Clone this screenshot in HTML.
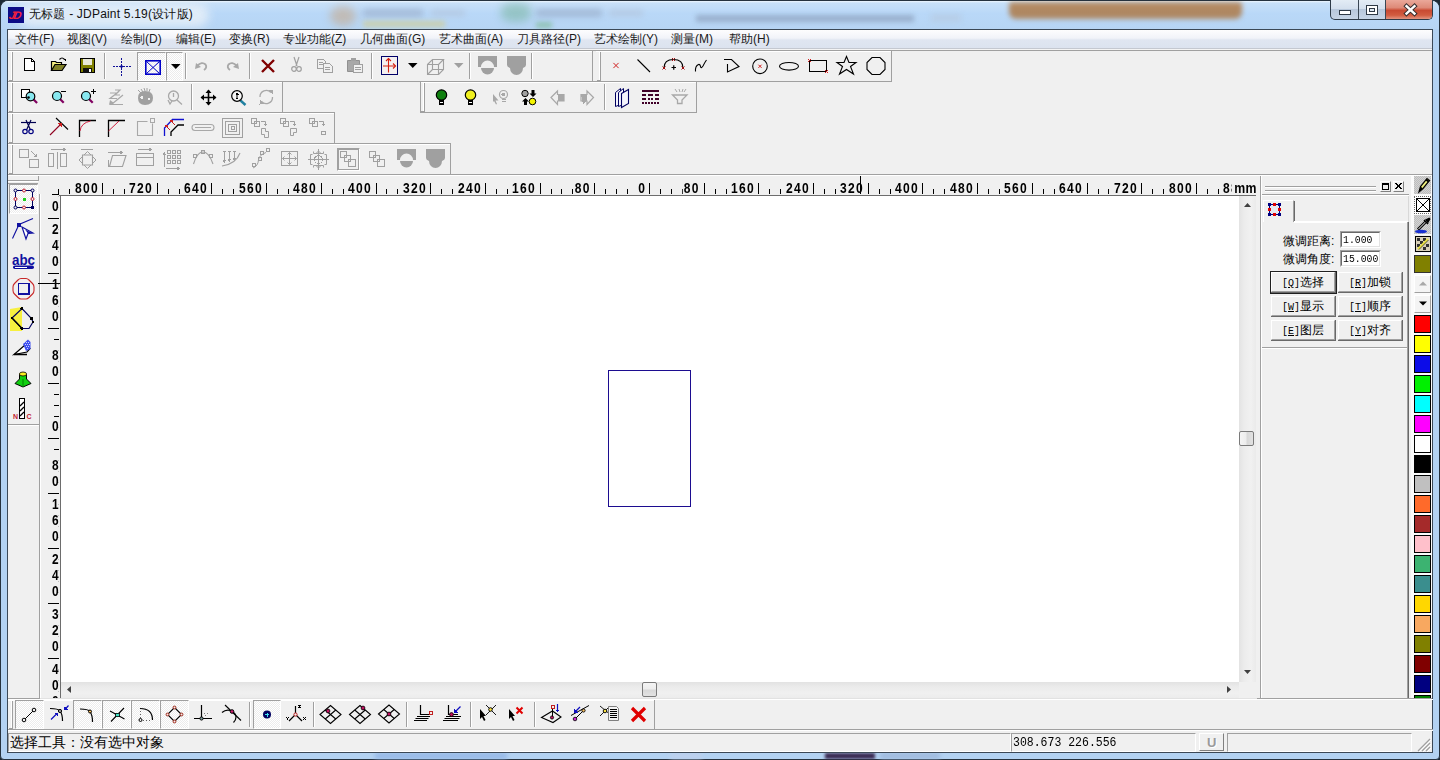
<!DOCTYPE html>
<html><head><meta charset="utf-8">
<style>
*{margin:0;padding:0;box-sizing:border-box}
html,body{width:1440px;height:760px;overflow:hidden;background:#1d2a36}
body{position:relative;font-family:"Liberation Sans",sans-serif;font-size:12px;color:#000}
.t{position:absolute;white-space:nowrap;line-height:1}
svg{position:absolute;overflow:visible;shape-rendering:crispEdges}
svg .s{shape-rendering:geometricPrecision}
.rl{position:absolute;font-weight:bold;font-size:14px;line-height:12px;white-space:nowrap;background:#f0f0f0}
</style></head><body>

<div style="position:absolute;left:0px;top:0px;width:1440px;height:760px;background:#b3d2f2;border:1px solid #26323e;border-radius:8px 8px 4px 4px"></div>
<div style="position:absolute;left:1px;top:1px;width:1438px;height:28px;background:linear-gradient(#eef6fd,#c8e0f8 2px,#b9d8f8 45%,#b7d5f4);border-radius:7px 7px 0 0;overflow:hidden"><div style="position:absolute;left:18px;top:2px;width:190px;height:24px;background:#e4eef8;filter:blur(5px);border-radius:12px;opacity:.9"></div><div style="position:absolute;left:329px;top:5px;width:26px;height:20px;background:#c8a078;filter:blur(4px);opacity:.5;border-radius:50%"></div><div style="position:absolute;left:362px;top:8px;width:60px;height:8px;background:#9fb3cf;filter:blur(3px);opacity:.8"></div><div style="position:absolute;left:430px;top:9px;width:34px;height:6px;background:#b3c5dc;filter:blur(3px);opacity:.8"></div><div style="position:absolute;left:362px;top:20px;width:82px;height:6px;background:#cfcf9c;filter:blur(2.5px);opacity:.8"></div><div style="position:absolute;left:500px;top:2px;width:30px;height:19px;background:#78b49e;filter:blur(4px);opacity:.55;border-radius:40%"></div><div style="position:absolute;left:535px;top:21px;width:16px;height:6px;background:#86bea4;filter:blur(2.5px);opacity:.8"></div><div style="position:absolute;left:535px;top:8px;width:66px;height:8px;background:#9db2ce;filter:blur(3px);opacity:.8"></div><div style="position:absolute;left:608px;top:9px;width:34px;height:6px;background:#b3c5dc;filter:blur(3px);opacity:.8"></div><div style="position:absolute;left:695px;top:14px;width:218px;height:7px;background:#94a9c6;filter:blur(2.5px);opacity:.85"></div><div style="position:absolute;left:930px;top:14px;width:30px;height:6px;background:#b6c8de;filter:blur(3px);opacity:.8"></div><div style="position:absolute;left:1008px;top:1px;width:233px;height:17px;background:linear-gradient(#b98e66,#ad8660 60%,#b08c68);filter:blur(2.5px);border-radius:3px 3px 7px 7px"></div></div>
<div style="position:absolute;left:1330px;top:0px;width:103px;height:20px;border:1px solid #2e3b48;border-top:none;border-radius:0 0 5px 5px;overflow:hidden;background:linear-gradient(#e3ecf5,#d4e0ee 45%,#b8c8dc 50%,#c6d5e6)"><div style="position:absolute;left:54px;top:0;width:48px;height:19px;background:linear-gradient(#eaa89a,#de8a78 40%,#c94a32 55%,#d25c40 80%,#e39480)"></div><div style="position:absolute;left:27px;top:0;width:1px;height:19px;background:#3a4754"></div><div style="position:absolute;left:54px;top:0;width:1px;height:19px;background:#3a4754"></div><div style="position:absolute;left:8px;top:10px;width:12px;height:5px;border:1px solid #2f3a46;background:#fff"></div><div style="position:absolute;left:35px;top:5px;width:12px;height:10px;border:1px solid #2f3a46;background:#fff"><div style="position:absolute;left:2px;top:2px;width:6px;height:4px;border:1px solid #2f3a46;background:#dfe8f2"></div></div><svg style="left:74px;top:5px" width="11" height="10" viewBox="0 0 11 10"><path class="s" d="M1.5 1.2 L9.5 8.6 M9.5 1.2 L1.5 8.6" stroke="#3a3030" stroke-width="4.4" stroke-linecap="square"/><path class="s" d="M1.5 1.2 L9.5 8.6 M9.5 1.2 L1.5 8.6" stroke="#fff" stroke-width="2.4" stroke-linecap="square"/></svg></div>
<div style="position:absolute;left:8px;top:7px;width:16px;height:16px;background:#0c0c86"><div style="position:absolute;left:1px;top:3px;font:italic bold 11px/11px 'Liberation Sans',sans-serif;color:#f02040;letter-spacing:-1.5px;transform:skewX(-12deg)">JD</div></div>
<div class="t" style="left:29px;top:8px;font-size:12px;color:#111;letter-spacing:0.2px">无标题 - JDPaint 5.19(设计版)</div>
<div style="position:absolute;left:375px;top:753px;width:132px;height:6px;background:#8fb2e4;filter:blur(2px);opacity:.8"></div>
<div style="position:absolute;left:825px;top:753px;width:50px;height:6px;background:#3a2a52;filter:blur(1.5px)"></div>
<div style="position:absolute;left:880px;top:753px;width:60px;height:6px;background:#9ab4d8;filter:blur(2px);opacity:.8"></div>
<div style="position:absolute;left:670px;top:753px;width:32px;height:6px;background:#c0d0ec;filter:blur(2px);opacity:.8"></div>
<div style="position:absolute;left:7px;top:29px;width:1426px;height:724px;border:1px solid #3b4856;background:#f0f0f0"></div>
<div style="position:absolute;left:8px;top:30px;width:1424px;height:18px;background:linear-gradient(#fdfdfe,#f1f3f9 45%,#e0e6f1 55%,#dce3ef)"></div>
<div style="position:absolute;left:8px;top:48px;width:1424px;height:1px;background:#c4c8d0"></div>
<div style="position:absolute;left:8px;top:49px;width:1424px;height:1px;background:#f4f4f4"></div>
<div class="t" style="left:15px;top:33px;font-size:12px;color:#1a1a1a">文件(F)</div>
<div class="t" style="left:67px;top:33px;font-size:12px;color:#1a1a1a">视图(V)</div>
<div class="t" style="left:121px;top:33px;font-size:12px;color:#1a1a1a">绘制(D)</div>
<div class="t" style="left:176px;top:33px;font-size:12px;color:#1a1a1a">编辑(E)</div>
<div class="t" style="left:229px;top:33px;font-size:12px;color:#1a1a1a">变换(R)</div>
<div class="t" style="left:283px;top:33px;font-size:12px;color:#1a1a1a">专业功能(Z)</div>
<div class="t" style="left:360px;top:33px;font-size:12px;color:#1a1a1a">几何曲面(G)</div>
<div class="t" style="left:439px;top:33px;font-size:12px;color:#1a1a1a">艺术曲面(A)</div>
<div class="t" style="left:517px;top:33px;font-size:12px;color:#1a1a1a">刀具路径(P)</div>
<div class="t" style="left:594px;top:33px;font-size:12px;color:#1a1a1a">艺术绘制(Y)</div>
<div class="t" style="left:671px;top:33px;font-size:12px;color:#1a1a1a">测量(M)</div>
<div class="t" style="left:729px;top:33px;font-size:12px;color:#1a1a1a">帮助(H)</div>
<div style="position:absolute;left:8px;top:174px;width:1424px;height:1px;background:#a0a0a0"></div>
<div style="position:absolute;left:8px;top:175px;width:1424px;height:1px;background:#ffffff"></div>
<div style="position:absolute;left:8px;top:50px;width:1424px;height:1px;background:#a0a0a0"></div>
<div style="position:absolute;left:8px;top:50px;width:585px;height:1px;background:#a0a0a0"></div>
<div style="position:absolute;left:8px;top:51px;width:584px;height:1px;background:#ffffff"></div>
<div style="position:absolute;left:8px;top:81px;width:585px;height:1px;background:#a0a0a0"></div>
<div style="position:absolute;left:592px;top:50px;width:1px;height:32px;background:#a0a0a0"></div>
<div style="position:absolute;left:11px;top:52px;width:1px;height:28px;background:#ffffff"></div>
<div style="position:absolute;left:12px;top:52px;width:1px;height:28px;background:#a0a0a0"></div>
<div style="position:absolute;left:9px;top:80px;width:4px;height:1px;background:#a0a0a0"></div>
<div style="position:absolute;left:596px;top:50px;width:296px;height:1px;background:#a0a0a0"></div>
<div style="position:absolute;left:596px;top:51px;width:295px;height:1px;background:#ffffff"></div>
<div style="position:absolute;left:596px;top:81px;width:296px;height:1px;background:#a0a0a0"></div>
<div style="position:absolute;left:891px;top:50px;width:1px;height:32px;background:#a0a0a0"></div>
<div style="position:absolute;left:599px;top:52px;width:1px;height:28px;background:#ffffff"></div>
<div style="position:absolute;left:600px;top:52px;width:1px;height:28px;background:#a0a0a0"></div>
<div style="position:absolute;left:597px;top:80px;width:4px;height:1px;background:#a0a0a0"></div>
<div style="position:absolute;left:8px;top:81px;width:275px;height:1px;background:#a0a0a0"></div>
<div style="position:absolute;left:8px;top:82px;width:274px;height:1px;background:#ffffff"></div>
<div style="position:absolute;left:8px;top:112px;width:275px;height:1px;background:#a0a0a0"></div>
<div style="position:absolute;left:282px;top:81px;width:1px;height:32px;background:#a0a0a0"></div>
<div style="position:absolute;left:11px;top:83px;width:1px;height:28px;background:#ffffff"></div>
<div style="position:absolute;left:12px;top:83px;width:1px;height:28px;background:#a0a0a0"></div>
<div style="position:absolute;left:9px;top:111px;width:4px;height:1px;background:#a0a0a0"></div>
<div style="position:absolute;left:420px;top:81px;width:277px;height:1px;background:#a0a0a0"></div>
<div style="position:absolute;left:420px;top:82px;width:276px;height:1px;background:#ffffff"></div>
<div style="position:absolute;left:420px;top:112px;width:277px;height:1px;background:#a0a0a0"></div>
<div style="position:absolute;left:696px;top:81px;width:1px;height:32px;background:#a0a0a0"></div>
<div style="position:absolute;left:423px;top:83px;width:1px;height:28px;background:#ffffff"></div>
<div style="position:absolute;left:424px;top:83px;width:1px;height:28px;background:#a0a0a0"></div>
<div style="position:absolute;left:421px;top:111px;width:4px;height:1px;background:#a0a0a0"></div>
<div style="position:absolute;left:8px;top:112px;width:327px;height:1px;background:#a0a0a0"></div>
<div style="position:absolute;left:8px;top:113px;width:326px;height:1px;background:#ffffff"></div>
<div style="position:absolute;left:8px;top:143px;width:327px;height:1px;background:#a0a0a0"></div>
<div style="position:absolute;left:334px;top:112px;width:1px;height:32px;background:#a0a0a0"></div>
<div style="position:absolute;left:11px;top:114px;width:1px;height:28px;background:#ffffff"></div>
<div style="position:absolute;left:12px;top:114px;width:1px;height:28px;background:#a0a0a0"></div>
<div style="position:absolute;left:9px;top:142px;width:4px;height:1px;background:#a0a0a0"></div>
<div style="position:absolute;left:8px;top:143px;width:443px;height:1px;background:#a0a0a0"></div>
<div style="position:absolute;left:8px;top:144px;width:442px;height:1px;background:#ffffff"></div>
<div style="position:absolute;left:8px;top:174px;width:443px;height:1px;background:#a0a0a0"></div>
<div style="position:absolute;left:450px;top:143px;width:1px;height:32px;background:#a0a0a0"></div>
<div style="position:absolute;left:11px;top:145px;width:1px;height:28px;background:#ffffff"></div>
<div style="position:absolute;left:12px;top:145px;width:1px;height:28px;background:#a0a0a0"></div>
<div style="position:absolute;left:9px;top:173px;width:4px;height:1px;background:#a0a0a0"></div>
<div style="position:absolute;left:420px;top:82px;width:1px;height:30px;background:#a0a0a0"></div>
<div style="position:absolute;left:8px;top:180px;width:31px;height:1px;background:#a0a0a0"></div>
<div style="position:absolute;left:8px;top:181px;width:30px;height:1px;background:#ffffff"></div>
<div style="position:absolute;left:8px;top:183px;width:30px;height:1px;background:#a0a0a0"></div>
<div style="position:absolute;left:38px;top:176px;width:1px;height:5px;background:#a0a0a0"></div>
<div style="position:absolute;left:8px;top:424px;width:31px;height:1px;background:#a0a0a0"></div>
<div style="position:absolute;left:8px;top:425px;width:31px;height:1px;background:#ffffff"></div>
<div style="position:absolute;left:9px;top:184px;width:29px;height:30px;background-color:#f7f7f7;background-image:repeating-conic-gradient(#ffffff 0 25%,#ececec 0 50%);background-size:2px 2px;border-top:1px solid #a0a0a0;border-left:1px solid #a0a0a0;border-bottom:1px solid #fff;border-right:1px solid #fff"></div>
<div style="position:absolute;left:39px;top:194px;width:1px;height:504px;background:#a0a0a0"></div>
<div style="position:absolute;left:40px;top:194px;width:1px;height:504px;background:#ffffff"></div>
<div style="position:absolute;left:61px;top:196px;width:1178px;height:486px;background:#fff"></div>
<div style="position:absolute;left:59px;top:195px;width:1197px;height:1px;background:#6d6d6d"></div>
<div style="position:absolute;left:60px;top:195px;width:1px;height:503px;background:#6d6d6d"></div>
<div style="position:absolute;left:608px;top:370px;width:83px;height:137px;border:1px solid #1c0c90"></div>
<div style="position:absolute;left:1239px;top:196px;width:17px;height:486px;background:linear-gradient(90deg,#e3e3e3,#ececec 30%,#f1f1f1 70%,#eaeaea)"></div>
<div style="position:absolute;left:61px;top:682px;width:1178px;height:16px;background:linear-gradient(#e2e2e2,#ebebeb 30%,#f0f0f0 70%,#ececec)"></div>
<div style="position:absolute;left:1239px;top:682px;width:17px;height:16px;background:#f0f0f0"></div>
<div style="position:absolute;left:1239px;top:431px;width:15px;height:15px;border:1px solid #7a7a7a;border-radius:2px;background:linear-gradient(90deg,#f4f4f4,#ededed 45%,#d8d8d8 55%,#e2e2e2)"></div>
<div style="position:absolute;left:642px;top:682px;width:15px;height:15px;border:1px solid #7a7a7a;border-radius:2px;background:linear-gradient(#f4f4f4,#ededed 45%,#d8d8d8 55%,#e2e2e2)"></div>
<svg style="left:1244px;top:203px;" width="7" height="4" viewBox="0 0 7 4"><path class="s" d="M0 4 L3.5 0 L7 4 Z" fill="#404040"/></svg>
<svg style="left:1244px;top:670px;" width="7" height="4" viewBox="0 0 7 4"><path class="s" d="M0 0 L7 0 L3.5 4 Z" fill="#404040"/></svg>
<svg style="left:67px;top:686px;" width="4" height="7" viewBox="0 0 4 7"><path class="s" d="M4 0 L0 3.5 L4 7 Z" fill="#404040"/></svg>
<svg style="left:1227px;top:686px;" width="4" height="7" viewBox="0 0 4 7"><path class="s" d="M0 0 L4 3.5 L0 7 Z" fill="#404040"/></svg>
<div style="position:absolute;left:8px;top:698px;width:32px;height:1px;background:#a0a0a0"></div>
<div style="position:absolute;left:40px;top:698px;width:1218px;height:1px;background:#e2e2e2"></div>
<div style="position:absolute;left:8px;top:699px;width:1425px;height:1px;background:#ffffff"></div>
<div style="position:absolute;left:41px;top:176px;width:1215px;height:19px;overflow:hidden">
<div style="position:absolute;left:17px;top:13px;width:1px;height:5px;background:#000"></div>
<div style="position:absolute;left:28px;top:13px;width:1px;height:5px;background:#000"></div>
<div style="position:absolute;left:39px;top:13px;width:1px;height:5px;background:#000"></div>
<div style="position:absolute;left:50px;top:13px;width:1px;height:5px;background:#000"></div>
<div style="position:absolute;left:61px;top:7px;width:1px;height:11px;background:#000"></div>
<div class="rl" style="right:1157px;top:6px;letter-spacing:1.6px;padding-left:1px;transform:scaleX(0.86);transform-origin:100% 0">800</div>
<div style="position:absolute;left:72px;top:13px;width:1px;height:5px;background:#000"></div>
<div style="position:absolute;left:83px;top:13px;width:1px;height:5px;background:#000"></div>
<div style="position:absolute;left:94px;top:13px;width:1px;height:5px;background:#000"></div>
<div style="position:absolute;left:105px;top:13px;width:1px;height:5px;background:#000"></div>
<div style="position:absolute;left:116px;top:7px;width:1px;height:11px;background:#000"></div>
<div class="rl" style="right:1103px;top:6px;letter-spacing:1.6px;padding-left:1px;transform:scaleX(0.86);transform-origin:100% 0">720</div>
<div style="position:absolute;left:127px;top:13px;width:1px;height:5px;background:#000"></div>
<div style="position:absolute;left:138px;top:13px;width:1px;height:5px;background:#000"></div>
<div style="position:absolute;left:149px;top:13px;width:1px;height:5px;background:#000"></div>
<div style="position:absolute;left:159px;top:13px;width:1px;height:5px;background:#000"></div>
<div style="position:absolute;left:170px;top:7px;width:1px;height:11px;background:#000"></div>
<div class="rl" style="right:1048px;top:6px;letter-spacing:1.6px;padding-left:1px;transform:scaleX(0.86);transform-origin:100% 0">640</div>
<div style="position:absolute;left:181px;top:13px;width:1px;height:5px;background:#000"></div>
<div style="position:absolute;left:192px;top:13px;width:1px;height:5px;background:#000"></div>
<div style="position:absolute;left:203px;top:13px;width:1px;height:5px;background:#000"></div>
<div style="position:absolute;left:214px;top:13px;width:1px;height:5px;background:#000"></div>
<div style="position:absolute;left:225px;top:7px;width:1px;height:11px;background:#000"></div>
<div class="rl" style="right:993px;top:6px;letter-spacing:1.6px;padding-left:1px;transform:scaleX(0.86);transform-origin:100% 0">560</div>
<div style="position:absolute;left:236px;top:13px;width:1px;height:5px;background:#000"></div>
<div style="position:absolute;left:247px;top:13px;width:1px;height:5px;background:#000"></div>
<div style="position:absolute;left:258px;top:13px;width:1px;height:5px;background:#000"></div>
<div style="position:absolute;left:269px;top:13px;width:1px;height:5px;background:#000"></div>
<div style="position:absolute;left:280px;top:7px;width:1px;height:11px;background:#000"></div>
<div class="rl" style="right:939px;top:6px;letter-spacing:1.6px;padding-left:1px;transform:scaleX(0.86);transform-origin:100% 0">480</div>
<div style="position:absolute;left:291px;top:13px;width:1px;height:5px;background:#000"></div>
<div style="position:absolute;left:302px;top:13px;width:1px;height:5px;background:#000"></div>
<div style="position:absolute;left:313px;top:13px;width:1px;height:5px;background:#000"></div>
<div style="position:absolute;left:324px;top:13px;width:1px;height:5px;background:#000"></div>
<div style="position:absolute;left:335px;top:7px;width:1px;height:11px;background:#000"></div>
<div class="rl" style="right:884px;top:6px;letter-spacing:1.6px;padding-left:1px;transform:scaleX(0.86);transform-origin:100% 0">400</div>
<div style="position:absolute;left:345px;top:13px;width:1px;height:5px;background:#000"></div>
<div style="position:absolute;left:356px;top:13px;width:1px;height:5px;background:#000"></div>
<div style="position:absolute;left:367px;top:13px;width:1px;height:5px;background:#000"></div>
<div style="position:absolute;left:378px;top:13px;width:1px;height:5px;background:#000"></div>
<div style="position:absolute;left:389px;top:7px;width:1px;height:11px;background:#000"></div>
<div class="rl" style="right:829px;top:6px;letter-spacing:1.6px;padding-left:1px;transform:scaleX(0.86);transform-origin:100% 0">320</div>
<div style="position:absolute;left:400px;top:13px;width:1px;height:5px;background:#000"></div>
<div style="position:absolute;left:411px;top:13px;width:1px;height:5px;background:#000"></div>
<div style="position:absolute;left:422px;top:13px;width:1px;height:5px;background:#000"></div>
<div style="position:absolute;left:433px;top:13px;width:1px;height:5px;background:#000"></div>
<div style="position:absolute;left:444px;top:7px;width:1px;height:11px;background:#000"></div>
<div class="rl" style="right:774px;top:6px;letter-spacing:1.6px;padding-left:1px;transform:scaleX(0.86);transform-origin:100% 0">240</div>
<div style="position:absolute;left:455px;top:13px;width:1px;height:5px;background:#000"></div>
<div style="position:absolute;left:466px;top:13px;width:1px;height:5px;background:#000"></div>
<div style="position:absolute;left:477px;top:13px;width:1px;height:5px;background:#000"></div>
<div style="position:absolute;left:488px;top:13px;width:1px;height:5px;background:#000"></div>
<div style="position:absolute;left:499px;top:7px;width:1px;height:11px;background:#000"></div>
<div class="rl" style="right:720px;top:6px;letter-spacing:1.6px;padding-left:1px;transform:scaleX(0.86);transform-origin:100% 0">160</div>
<div style="position:absolute;left:510px;top:13px;width:1px;height:5px;background:#000"></div>
<div style="position:absolute;left:520px;top:13px;width:1px;height:5px;background:#000"></div>
<div style="position:absolute;left:531px;top:13px;width:1px;height:5px;background:#000"></div>
<div style="position:absolute;left:542px;top:13px;width:1px;height:5px;background:#000"></div>
<div style="position:absolute;left:553px;top:7px;width:1px;height:11px;background:#000"></div>
<div class="rl" style="right:665px;top:6px;letter-spacing:1.6px;padding-left:1px;transform:scaleX(0.86);transform-origin:100% 0">80</div>
<div style="position:absolute;left:564px;top:13px;width:1px;height:5px;background:#000"></div>
<div style="position:absolute;left:575px;top:13px;width:1px;height:5px;background:#000"></div>
<div style="position:absolute;left:586px;top:13px;width:1px;height:5px;background:#000"></div>
<div style="position:absolute;left:597px;top:13px;width:1px;height:5px;background:#000"></div>
<div style="position:absolute;left:608px;top:7px;width:1px;height:11px;background:#000"></div>
<div class="rl" style="right:610px;top:6px;letter-spacing:1.6px;padding-left:1px;transform:scaleX(0.86);transform-origin:100% 0">0</div>
<div style="position:absolute;left:619px;top:13px;width:1px;height:5px;background:#000"></div>
<div style="position:absolute;left:630px;top:13px;width:1px;height:5px;background:#000"></div>
<div style="position:absolute;left:641px;top:13px;width:1px;height:5px;background:#000"></div>
<div style="position:absolute;left:652px;top:13px;width:1px;height:5px;background:#000"></div>
<div style="position:absolute;left:663px;top:7px;width:1px;height:11px;background:#000"></div>
<div class="rl" style="right:556px;top:6px;letter-spacing:1.6px;padding-left:1px;transform:scaleX(0.86);transform-origin:100% 0">80</div>
<div style="position:absolute;left:674px;top:13px;width:1px;height:5px;background:#000"></div>
<div style="position:absolute;left:685px;top:13px;width:1px;height:5px;background:#000"></div>
<div style="position:absolute;left:696px;top:13px;width:1px;height:5px;background:#000"></div>
<div style="position:absolute;left:706px;top:13px;width:1px;height:5px;background:#000"></div>
<div style="position:absolute;left:717px;top:7px;width:1px;height:11px;background:#000"></div>
<div class="rl" style="right:501px;top:6px;letter-spacing:1.6px;padding-left:1px;transform:scaleX(0.86);transform-origin:100% 0">160</div>
<div style="position:absolute;left:728px;top:13px;width:1px;height:5px;background:#000"></div>
<div style="position:absolute;left:739px;top:13px;width:1px;height:5px;background:#000"></div>
<div style="position:absolute;left:750px;top:13px;width:1px;height:5px;background:#000"></div>
<div style="position:absolute;left:761px;top:13px;width:1px;height:5px;background:#000"></div>
<div style="position:absolute;left:772px;top:7px;width:1px;height:11px;background:#000"></div>
<div class="rl" style="right:446px;top:6px;letter-spacing:1.6px;padding-left:1px;transform:scaleX(0.86);transform-origin:100% 0">240</div>
<div style="position:absolute;left:783px;top:13px;width:1px;height:5px;background:#000"></div>
<div style="position:absolute;left:794px;top:13px;width:1px;height:5px;background:#000"></div>
<div style="position:absolute;left:805px;top:13px;width:1px;height:5px;background:#000"></div>
<div style="position:absolute;left:816px;top:13px;width:1px;height:5px;background:#000"></div>
<div style="position:absolute;left:827px;top:7px;width:1px;height:11px;background:#000"></div>
<div class="rl" style="right:392px;top:6px;letter-spacing:1.6px;padding-left:1px;transform:scaleX(0.86);transform-origin:100% 0">320</div>
<div style="position:absolute;left:838px;top:13px;width:1px;height:5px;background:#000"></div>
<div style="position:absolute;left:849px;top:13px;width:1px;height:5px;background:#000"></div>
<div style="position:absolute;left:860px;top:13px;width:1px;height:5px;background:#000"></div>
<div style="position:absolute;left:871px;top:13px;width:1px;height:5px;background:#000"></div>
<div style="position:absolute;left:881px;top:7px;width:1px;height:11px;background:#000"></div>
<div class="rl" style="right:337px;top:6px;letter-spacing:1.6px;padding-left:1px;transform:scaleX(0.86);transform-origin:100% 0">400</div>
<div style="position:absolute;left:892px;top:13px;width:1px;height:5px;background:#000"></div>
<div style="position:absolute;left:903px;top:13px;width:1px;height:5px;background:#000"></div>
<div style="position:absolute;left:914px;top:13px;width:1px;height:5px;background:#000"></div>
<div style="position:absolute;left:925px;top:13px;width:1px;height:5px;background:#000"></div>
<div style="position:absolute;left:936px;top:7px;width:1px;height:11px;background:#000"></div>
<div class="rl" style="right:282px;top:6px;letter-spacing:1.6px;padding-left:1px;transform:scaleX(0.86);transform-origin:100% 0">480</div>
<div style="position:absolute;left:947px;top:13px;width:1px;height:5px;background:#000"></div>
<div style="position:absolute;left:958px;top:13px;width:1px;height:5px;background:#000"></div>
<div style="position:absolute;left:969px;top:13px;width:1px;height:5px;background:#000"></div>
<div style="position:absolute;left:980px;top:13px;width:1px;height:5px;background:#000"></div>
<div style="position:absolute;left:991px;top:7px;width:1px;height:11px;background:#000"></div>
<div class="rl" style="right:228px;top:6px;letter-spacing:1.6px;padding-left:1px;transform:scaleX(0.86);transform-origin:100% 0">560</div>
<div style="position:absolute;left:1002px;top:13px;width:1px;height:5px;background:#000"></div>
<div style="position:absolute;left:1013px;top:13px;width:1px;height:5px;background:#000"></div>
<div style="position:absolute;left:1024px;top:13px;width:1px;height:5px;background:#000"></div>
<div style="position:absolute;left:1035px;top:13px;width:1px;height:5px;background:#000"></div>
<div style="position:absolute;left:1046px;top:7px;width:1px;height:11px;background:#000"></div>
<div class="rl" style="right:173px;top:6px;letter-spacing:1.6px;padding-left:1px;transform:scaleX(0.86);transform-origin:100% 0">640</div>
<div style="position:absolute;left:1057px;top:13px;width:1px;height:5px;background:#000"></div>
<div style="position:absolute;left:1067px;top:13px;width:1px;height:5px;background:#000"></div>
<div style="position:absolute;left:1078px;top:13px;width:1px;height:5px;background:#000"></div>
<div style="position:absolute;left:1089px;top:13px;width:1px;height:5px;background:#000"></div>
<div style="position:absolute;left:1100px;top:7px;width:1px;height:11px;background:#000"></div>
<div class="rl" style="right:118px;top:6px;letter-spacing:1.6px;padding-left:1px;transform:scaleX(0.86);transform-origin:100% 0">720</div>
<div style="position:absolute;left:1111px;top:13px;width:1px;height:5px;background:#000"></div>
<div style="position:absolute;left:1122px;top:13px;width:1px;height:5px;background:#000"></div>
<div style="position:absolute;left:1133px;top:13px;width:1px;height:5px;background:#000"></div>
<div style="position:absolute;left:1144px;top:13px;width:1px;height:5px;background:#000"></div>
<div style="position:absolute;left:1155px;top:7px;width:1px;height:11px;background:#000"></div>
<div class="rl" style="right:63px;top:6px;letter-spacing:1.6px;padding-left:1px;transform:scaleX(0.86);transform-origin:100% 0">800</div>
<div style="position:absolute;left:1166px;top:13px;width:1px;height:5px;background:#000"></div>
<div style="position:absolute;left:1177px;top:13px;width:1px;height:5px;background:#000"></div>
<div style="position:absolute;left:1188px;top:13px;width:1px;height:5px;background:#000"></div>
<div style="position:absolute;left:1199px;top:13px;width:1px;height:5px;background:#000"></div>
<div class="rl" style="right:9px;top:6px;letter-spacing:1.6px;padding-left:1px;transform:scaleX(0.86);transform-origin:100% 0">880</div>
</div>
<div style="position:absolute;left:1232px;top:178px;width:25px;height:16px;background:#f0f0f0"><div class="rl" style="right:0px;top:4px;letter-spacing:0.6px;transform:scaleX(0.88);transform-origin:100% 0">mm</div></div>
<div style="position:absolute;left:860px;top:176px;width:1px;height:18px;background:#000"></div>
<div style="position:absolute;left:41px;top:196px;width:19px;height:502px;overflow:hidden">
<div style="position:absolute;left:13px;top:-22px;width:5px;height:1px;background:#000"></div>
<div style="position:absolute;left:13px;top:-11px;width:5px;height:1px;background:#000"></div>
<div style="position:absolute;left:13px;top:0px;width:5px;height:1px;background:#000"></div>
<div style="position:absolute;left:13px;top:11px;width:5px;height:1px;background:#000"></div>
<div style="position:absolute;left:7px;top:22px;width:11px;height:1px;background:#000"></div>
<div style="position:absolute;left:13px;top:33px;width:5px;height:1px;background:#000"></div>
<div style="position:absolute;left:13px;top:44px;width:5px;height:1px;background:#000"></div>
<div style="position:absolute;left:13px;top:55px;width:5px;height:1px;background:#000"></div>
<div style="position:absolute;left:13px;top:66px;width:5px;height:1px;background:#000"></div>
<div style="position:absolute;left:7px;top:77px;width:11px;height:1px;background:#000"></div>
<div style="position:absolute;left:13px;top:88px;width:5px;height:1px;background:#000"></div>
<div style="position:absolute;left:13px;top:99px;width:5px;height:1px;background:#000"></div>
<div style="position:absolute;left:13px;top:110px;width:5px;height:1px;background:#000"></div>
<div style="position:absolute;left:13px;top:121px;width:5px;height:1px;background:#000"></div>
<div style="position:absolute;left:7px;top:132px;width:11px;height:1px;background:#000"></div>
<div style="position:absolute;left:13px;top:143px;width:5px;height:1px;background:#000"></div>
<div style="position:absolute;left:13px;top:154px;width:5px;height:1px;background:#000"></div>
<div style="position:absolute;left:13px;top:165px;width:5px;height:1px;background:#000"></div>
<div style="position:absolute;left:13px;top:176px;width:5px;height:1px;background:#000"></div>
<div style="position:absolute;left:7px;top:187px;width:11px;height:1px;background:#000"></div>
<div style="position:absolute;left:13px;top:198px;width:5px;height:1px;background:#000"></div>
<div style="position:absolute;left:13px;top:209px;width:5px;height:1px;background:#000"></div>
<div style="position:absolute;left:13px;top:220px;width:5px;height:1px;background:#000"></div>
<div style="position:absolute;left:13px;top:231px;width:5px;height:1px;background:#000"></div>
<div style="position:absolute;left:7px;top:242px;width:11px;height:1px;background:#000"></div>
<div style="position:absolute;left:13px;top:253px;width:5px;height:1px;background:#000"></div>
<div style="position:absolute;left:13px;top:264px;width:5px;height:1px;background:#000"></div>
<div style="position:absolute;left:13px;top:275px;width:5px;height:1px;background:#000"></div>
<div style="position:absolute;left:13px;top:286px;width:5px;height:1px;background:#000"></div>
<div style="position:absolute;left:7px;top:297px;width:11px;height:1px;background:#000"></div>
<div style="position:absolute;left:13px;top:308px;width:5px;height:1px;background:#000"></div>
<div style="position:absolute;left:13px;top:319px;width:5px;height:1px;background:#000"></div>
<div style="position:absolute;left:13px;top:330px;width:5px;height:1px;background:#000"></div>
<div style="position:absolute;left:13px;top:341px;width:5px;height:1px;background:#000"></div>
<div style="position:absolute;left:7px;top:352px;width:11px;height:1px;background:#000"></div>
<div style="position:absolute;left:13px;top:363px;width:5px;height:1px;background:#000"></div>
<div style="position:absolute;left:13px;top:374px;width:5px;height:1px;background:#000"></div>
<div style="position:absolute;left:13px;top:385px;width:5px;height:1px;background:#000"></div>
<div style="position:absolute;left:13px;top:396px;width:5px;height:1px;background:#000"></div>
<div style="position:absolute;left:7px;top:407px;width:11px;height:1px;background:#000"></div>
<div style="position:absolute;left:13px;top:418px;width:5px;height:1px;background:#000"></div>
<div style="position:absolute;left:13px;top:429px;width:5px;height:1px;background:#000"></div>
<div style="position:absolute;left:13px;top:440px;width:5px;height:1px;background:#000"></div>
<div style="position:absolute;left:13px;top:451px;width:5px;height:1px;background:#000"></div>
<div style="position:absolute;left:7px;top:462px;width:11px;height:1px;background:#000"></div>
<div style="position:absolute;left:13px;top:473px;width:5px;height:1px;background:#000"></div>
<div style="position:absolute;left:13px;top:484px;width:5px;height:1px;background:#000"></div>
<div style="position:absolute;left:13px;top:495px;width:5px;height:1px;background:#000"></div>
<div style="position:absolute;left:13px;top:506px;width:5px;height:1px;background:#000"></div>
<div style="position:absolute;left:13px;top:528px;width:5px;height:1px;background:#000"></div>
<div style="position:absolute;left:13px;top:539px;width:5px;height:1px;background:#000"></div>
<div style="position:absolute;left:13px;top:550px;width:5px;height:1px;background:#000"></div>
<div style="position:absolute;left:13px;top:561px;width:5px;height:1px;background:#000"></div>
<div class="rl" style="left:11px;top:-84px;padding:1px 0 3px;transform:scaleX(0.85);transform-origin:0 0">4</div>
<div class="rl" style="left:11px;top:-68px;padding:1px 0 3px;transform:scaleX(0.85);transform-origin:0 0">0</div>
<div class="rl" style="left:11px;top:-52px;padding:1px 0 3px;transform:scaleX(0.85);transform-origin:0 0">0</div>
<div class="rl" style="left:11px;top:-29px;padding:1px 0 3px;transform:scaleX(0.85);transform-origin:0 0">3</div>
<div class="rl" style="left:11px;top:-13px;padding:1px 0 3px;transform:scaleX(0.85);transform-origin:0 0">2</div>
<div class="rl" style="left:11px;top:3px;padding:1px 0 3px;transform:scaleX(0.85);transform-origin:0 0">0</div>
<div class="rl" style="left:11px;top:26px;padding:1px 0 3px;transform:scaleX(0.85);transform-origin:0 0">2</div>
<div class="rl" style="left:11px;top:42px;padding:1px 0 3px;transform:scaleX(0.85);transform-origin:0 0">4</div>
<div class="rl" style="left:11px;top:58px;padding:1px 0 3px;transform:scaleX(0.85);transform-origin:0 0">0</div>
<div class="rl" style="left:11px;top:81px;padding:1px 0 3px;transform:scaleX(0.85);transform-origin:0 0">1</div>
<div class="rl" style="left:11px;top:97px;padding:1px 0 3px;transform:scaleX(0.85);transform-origin:0 0">6</div>
<div class="rl" style="left:11px;top:113px;padding:1px 0 3px;transform:scaleX(0.85);transform-origin:0 0">0</div>
<div class="rl" style="left:11px;top:152px;padding:1px 0 3px;transform:scaleX(0.85);transform-origin:0 0">8</div>
<div class="rl" style="left:11px;top:168px;padding:1px 0 3px;transform:scaleX(0.85);transform-origin:0 0">0</div>
<div class="rl" style="left:11px;top:223px;padding:1px 0 3px;transform:scaleX(0.85);transform-origin:0 0">0</div>
<div class="rl" style="left:11px;top:262px;padding:1px 0 3px;transform:scaleX(0.85);transform-origin:0 0">8</div>
<div class="rl" style="left:11px;top:278px;padding:1px 0 3px;transform:scaleX(0.85);transform-origin:0 0">0</div>
<div class="rl" style="left:11px;top:301px;padding:1px 0 3px;transform:scaleX(0.85);transform-origin:0 0">1</div>
<div class="rl" style="left:11px;top:317px;padding:1px 0 3px;transform:scaleX(0.85);transform-origin:0 0">6</div>
<div class="rl" style="left:11px;top:333px;padding:1px 0 3px;transform:scaleX(0.85);transform-origin:0 0">0</div>
<div class="rl" style="left:11px;top:356px;padding:1px 0 3px;transform:scaleX(0.85);transform-origin:0 0">2</div>
<div class="rl" style="left:11px;top:372px;padding:1px 0 3px;transform:scaleX(0.85);transform-origin:0 0">4</div>
<div class="rl" style="left:11px;top:388px;padding:1px 0 3px;transform:scaleX(0.85);transform-origin:0 0">0</div>
<div class="rl" style="left:11px;top:411px;padding:1px 0 3px;transform:scaleX(0.85);transform-origin:0 0">3</div>
<div class="rl" style="left:11px;top:427px;padding:1px 0 3px;transform:scaleX(0.85);transform-origin:0 0">2</div>
<div class="rl" style="left:11px;top:443px;padding:1px 0 3px;transform:scaleX(0.85);transform-origin:0 0">0</div>
<div class="rl" style="left:11px;top:466px;padding:1px 0 3px;transform:scaleX(0.85);transform-origin:0 0">4</div>
<div class="rl" style="left:11px;top:482px;padding:1px 0 3px;transform:scaleX(0.85);transform-origin:0 0">0</div>
<div class="rl" style="left:11px;top:498px;padding:1px 0 3px;transform:scaleX(0.85);transform-origin:0 0">0</div>
</div>
<div style="position:absolute;left:58px;top:189px;width:1px;height:5px;background:#000"></div>
<div style="position:absolute;left:69px;top:189px;width:1px;height:5px;background:#000"></div>
<div style="position:absolute;left:52px;top:194px;width:7px;height:1px;background:#000"></div>
<div style="position:absolute;left:38px;top:283px;width:22px;height:1px;background:#000"></div>
<div style="position:absolute;left:1260px;top:176px;width:1px;height:522px;background:#a0a0a0"></div>
<div style="position:absolute;left:1261px;top:176px;width:1px;height:522px;background:#ffffff"></div>
<div style="position:absolute;left:1265px;top:186px;width:111px;height:1px;background:#a0a0a0"></div>
<div style="position:absolute;left:1265px;top:187px;width:111px;height:1px;background:#ffffff"></div>
<div style="position:absolute;left:1265px;top:190px;width:111px;height:1px;background:#a0a0a0"></div>
<div style="position:absolute;left:1265px;top:191px;width:111px;height:1px;background:#ffffff"></div>
<div style="position:absolute;left:1380px;top:181px;width:11px;height:11px;background:#f0f0f0;border-top:1px solid #fff;border-left:1px solid #fff;border-right:1px solid #808080;border-bottom:1px solid #808080"><div style="position:absolute;left:1px;top:1px;width:7px;height:7px;border:1px solid #000;border-top-width:2px"></div></div>
<div style="position:absolute;left:1393px;top:181px;width:11px;height:11px;background:#f0f0f0;border-top:1px solid #fff;border-left:1px solid #fff;border-right:1px solid #808080;border-bottom:1px solid #808080"><svg style="left:1px;top:1px" width="7" height="7" viewBox="0 0 7 7"><path d="M0 0h2v1h-2zM5 0h2v1h-2zM1 1h2v1h-2zM4 1h2v1h-2zM2 2h3v1h-3zM2 3h3v1h-3zM1 4h2v1h-2zM4 4h2v1h-2zM0 5h2v1h-2zM5 5h2v1h-2z" fill="#000"/></svg></div>
<div style="position:absolute;left:1262px;top:194px;width:147px;height:1px;background:#a0a0a0"></div>
<div style="position:absolute;left:1262px;top:195px;width:147px;height:1px;background:#ffffff"></div>
<div style="position:absolute;left:1263px;top:200px;width:31px;height:22px;border-top:1px solid #fff;border-left:1px solid #fff;border-right:1px solid #a0a0a0;background:#f0f0f0"></div>
<div style="position:absolute;left:1294px;top:201px;width:1px;height:21px;background:#696969"></div>
<div style="position:absolute;left:1294px;top:221px;width:114px;height:1px;background:#ffffff"></div>
<div style="position:absolute;left:1294px;top:222px;width:114px;height:1px;background:#ffffff"></div>
<div style="position:absolute;left:1407px;top:222px;width:1px;height:476px;background:#a0a0a0"></div>
<div style="position:absolute;left:1408px;top:222px;width:1px;height:476px;background:#696969"></div>
<div style="position:absolute;left:1408px;top:196px;width:1px;height:26px;background:#d8d8d8"></div>
<svg style="left:1268px;top:203px;" width="13" height="13" viewBox="0 0 13 13"><rect x="1.5" y="1.5" width="10" height="10" fill="#e8e8f0" stroke="#000080" stroke-width="1"/><rect x="0" y="0" width="3" height="3" fill="#000080"/><rect x="10" y="0" width="3" height="3" fill="#000080"/><rect x="0" y="10" width="3" height="3" fill="#000080"/><rect x="10" y="10" width="3" height="3" fill="#000080"/><rect x="5" y="0" width="3" height="3" fill="#e00000"/><rect x="5" y="10" width="3" height="3" fill="#e00000"/><rect x="0" y="5" width="3" height="3" fill="#e00000"/><rect x="10" y="5" width="3" height="3" fill="#e00000"/></svg>
<div class="t" style="left:1283px;top:235px;font-size:12px;color:#000">微调距离:</div>
<div class="t" style="left:1283px;top:253px;font-size:12px;color:#000">微调角度:</div>
<div style="position:absolute;left:1340px;top:231px;width:41px;height:17px;background:#fff;border-top:1px solid #a0a0a0;border-left:1px solid #a0a0a0;border-right:1px solid #fff;border-bottom:1px solid #fff"><div style="position:absolute;left:0;top:0;right:0;bottom:0;border-top:1px solid #696969;border-left:1px solid #696969;border-right:1px solid #e3e3e3;border-bottom:1px solid #e3e3e3"></div><div class="t" style="left:2px;top:3px;font-family:'Liberation Mono',monospace;font-size:9.8px;transform:scaleY(1.2);transform-origin:0 0">1.000</div></div>
<div style="position:absolute;left:1340px;top:250px;width:41px;height:17px;background:#fff;border-top:1px solid #a0a0a0;border-left:1px solid #a0a0a0;border-right:1px solid #fff;border-bottom:1px solid #fff"><div style="position:absolute;left:0;top:0;right:0;bottom:0;border-top:1px solid #696969;border-left:1px solid #696969;border-right:1px solid #e3e3e3;border-bottom:1px solid #e3e3e3"></div><div class="t" style="left:2px;top:3px;font-family:'Liberation Mono',monospace;font-size:9.8px;transform:scaleY(1.2);transform-origin:0 0">15.000</div></div>
<div style="position:absolute;left:1271px;top:272px;width:65px;height:21px;background:#f0f0f0;border-right:1px solid #696969;border-bottom:1px solid #696969;outline:1px solid #202020;outline-offset:0px;"><div style="position:absolute;left:0;top:0;right:0;bottom:0;border-top:1px solid #fff;border-left:1px solid #fff;border-right:1px solid #a0a0a0;border-bottom:1px solid #a0a0a0"></div><div class="t" style="left:0;width:100%;text-align:center;top:4px;font-size:12px"><span style="font-family:'Liberation Mono',monospace;font-size:10px">[<u>Q</u>]</span>选择</div></div>
<div style="position:absolute;left:1338px;top:272px;width:65px;height:21px;background:#f0f0f0;border-right:1px solid #696969;border-bottom:1px solid #696969;"><div style="position:absolute;left:0;top:0;right:0;bottom:0;border-top:1px solid #fff;border-left:1px solid #fff;border-right:1px solid #a0a0a0;border-bottom:1px solid #a0a0a0"></div><div class="t" style="left:0;width:100%;text-align:center;top:4px;font-size:12px"><span style="font-family:'Liberation Mono',monospace;font-size:10px">[<u>R</u>]</span>加锁</div></div>
<div style="position:absolute;left:1271px;top:296px;width:65px;height:21px;background:#f0f0f0;border-right:1px solid #696969;border-bottom:1px solid #696969;"><div style="position:absolute;left:0;top:0;right:0;bottom:0;border-top:1px solid #fff;border-left:1px solid #fff;border-right:1px solid #a0a0a0;border-bottom:1px solid #a0a0a0"></div><div class="t" style="left:0;width:100%;text-align:center;top:4px;font-size:12px"><span style="font-family:'Liberation Mono',monospace;font-size:10px">[<u>W</u>]</span>显示</div></div>
<div style="position:absolute;left:1338px;top:296px;width:65px;height:21px;background:#f0f0f0;border-right:1px solid #696969;border-bottom:1px solid #696969;"><div style="position:absolute;left:0;top:0;right:0;bottom:0;border-top:1px solid #fff;border-left:1px solid #fff;border-right:1px solid #a0a0a0;border-bottom:1px solid #a0a0a0"></div><div class="t" style="left:0;width:100%;text-align:center;top:4px;font-size:12px"><span style="font-family:'Liberation Mono',monospace;font-size:10px">[<u>T</u>]</span>顺序</div></div>
<div style="position:absolute;left:1271px;top:320px;width:65px;height:21px;background:#f0f0f0;border-right:1px solid #696969;border-bottom:1px solid #696969;"><div style="position:absolute;left:0;top:0;right:0;bottom:0;border-top:1px solid #fff;border-left:1px solid #fff;border-right:1px solid #a0a0a0;border-bottom:1px solid #a0a0a0"></div><div class="t" style="left:0;width:100%;text-align:center;top:4px;font-size:12px"><span style="font-family:'Liberation Mono',monospace;font-size:10px">[<u>E</u>]</span>图层</div></div>
<div style="position:absolute;left:1338px;top:320px;width:65px;height:21px;background:#f0f0f0;border-right:1px solid #696969;border-bottom:1px solid #696969;"><div style="position:absolute;left:0;top:0;right:0;bottom:0;border-top:1px solid #fff;border-left:1px solid #fff;border-right:1px solid #a0a0a0;border-bottom:1px solid #a0a0a0"></div><div class="t" style="left:0;width:100%;text-align:center;top:4px;font-size:12px"><span style="font-family:'Liberation Mono',monospace;font-size:10px">[<u>Y</u>]</span>对齐</div></div>
<div style="position:absolute;left:1262px;top:347px;width:145px;height:1px;background:#a0a0a0"></div>
<div style="position:absolute;left:1262px;top:348px;width:145px;height:1px;background:#ffffff"></div>
<div style="position:absolute;left:1411px;top:176px;width:21px;height:522px;background:#fbfbfb"></div>
<div style="position:absolute;left:1414px;top:176px;width:17px;height:18px;background-color:#c8c8c8;background-image:repeating-conic-gradient(#d4d4d4 0 25%,#bcbcbc 0 50%);background-size:2px 2px"></div>
<svg style="left:1414px;top:176px;" width="18" height="18" viewBox="0 0 18 18"><path class="s" d="M5 16 L6.5 10.5 L13 2.5 L15.5 4.5 L9 12.5 Z" fill="#f0f080" stroke="#000" stroke-width="1.2"/><path class="s" d="M5 16 L6.5 10.5 L9 12.5 Z" fill="#000"/><path class="s" d="M12 3.5 L14.5 5.5" stroke="#000" stroke-width="2"/></svg>
<div style="position:absolute;left:1414px;top:196px;width:17px;height:18px;background:#fff;border:1px dotted #666"></div>
<svg style="left:1415.5px;top:198px;" width="14" height="14" viewBox="0 0 14 14"><rect x="0.5" y="0.5" width="13" height="13" fill="#fff" stroke="#000" stroke-width="1.4"/><path class="s" d="M1 1 L13 13 M13 1 L1 13" stroke="#000" stroke-width="1"/></svg>
<div style="position:absolute;left:1414px;top:215px;width:17px;height:19px;background-color:#c8c8c8;background-image:repeating-conic-gradient(#d4d4d4 0 25%,#bcbcbc 0 50%);background-size:2px 2px"></div>
<svg style="left:1414px;top:215px;" width="18" height="19" viewBox="0 0 18 19"><path class="s" d="M4 14.5 L12 6.5" stroke="#000" stroke-width="3"/><path class="s" d="M4.5 14 L11.5 7" stroke="#fff" stroke-width="1"/><path class="s" d="M11 4.5 L15.5 2.5 L16.5 4 L14 8.5 Z" fill="#000"/><path class="s" d="M10 5 L14 9" stroke="#000" stroke-width="1.5"/><ellipse class="s" cx="7" cy="16.5" rx="6" ry="1.8" fill="#1830d0"/></svg>
<div style="position:absolute;left:1414px;top:235px;width:17px;height:18px;background:#f0f0f0"></div>
<svg style="left:1415px;top:236px;" width="16" height="16" viewBox="0 0 16 16"><rect x="0.5" y="0.5" width="15" height="15" fill="#d8d0b8" stroke="#000" stroke-width="1.5"/><path d="M2 2h3v3h-3zM8 2h3v3h-3zM2 8h3v3h-3zM5 5h3v3h-3zM8 11h3v3h-3zM11 8h3v3h-3z" fill="#303030"/><path class="s" d="M3 13 L13 3" stroke="#e8e040" stroke-width="2"/><path class="s" d="M4 13.5 L13.5 4" stroke="#000" stroke-width="0.6"/></svg>
<div style="position:absolute;left:1414px;top:255px;width:17px;height:18px;background:#808000;border:1px solid #333"></div>
<div style="position:absolute;left:1414px;top:275px;width:17px;height:18px;background:#f4f4f4;border-top:1px solid #fff;border-left:1px solid #fff;border-right:1px solid #a0a0a0;border-bottom:1px solid #a0a0a0"></div>
<svg style="left:1419px;top:281px;" width="8" height="5" viewBox="0 0 8 5"><path class="s" d="M0 4.5 L4 0.5 L8 4.5 Z" fill="#a8a8a8"/></svg>
<div style="position:absolute;left:1414px;top:295px;width:17px;height:18px;background:#f4f4f4;border-top:1px solid #fff;border-left:1px solid #fff;border-right:1px solid #a0a0a0;border-bottom:1px solid #a0a0a0"></div>
<svg style="left:1419px;top:301px;" width="8" height="5" viewBox="0 0 8 5"><path class="s" d="M0 0.5 L8 0.5 L4 4.5 Z" fill="#000"/></svg>
<div style="position:absolute;left:1414px;top:315px;width:17px;height:18px;background:#ff0000;border:1px solid #000;"></div>
<div style="position:absolute;left:1414px;top:335px;width:17px;height:18px;background:#ffff00;border:1px solid #000;"></div>
<div style="position:absolute;left:1414px;top:355px;width:17px;height:18px;background:#0c0ce8;border:1px solid #000;"></div>
<div style="position:absolute;left:1414px;top:375px;width:17px;height:18px;background:#00f000;border:1px solid #000;"></div>
<div style="position:absolute;left:1414px;top:395px;width:17px;height:18px;background:#00ffff;border:1px solid #000;"></div>
<div style="position:absolute;left:1414px;top:415px;width:17px;height:18px;background:#ff00ff;border:1px solid #000;"></div>
<div style="position:absolute;left:1414px;top:435px;width:17px;height:18px;background:#ffffff;border:1px solid #000;"></div>
<div style="position:absolute;left:1414px;top:455px;width:17px;height:18px;background:#000000;border:1px solid #000;"></div>
<div style="position:absolute;left:1414px;top:475px;width:17px;height:18px;background:#c0c0c0;border:1px solid #000;"></div>
<div style="position:absolute;left:1414px;top:495px;width:17px;height:18px;background:#ff6a2a;border:1px solid #000;"></div>
<div style="position:absolute;left:1414px;top:515px;width:17px;height:18px;background:#a52a2a;border:1px solid #000;"></div>
<div style="position:absolute;left:1414px;top:535px;width:17px;height:18px;background:#ffc0cb;border:1px solid #000;"></div>
<div style="position:absolute;left:1414px;top:555px;width:17px;height:18px;background:#3cb371;border:1px solid #000;"></div>
<div style="position:absolute;left:1414px;top:575px;width:17px;height:18px;background:#3a8e8e;border:1px solid #000;"></div>
<div style="position:absolute;left:1414px;top:595px;width:17px;height:18px;background:#ffd700;border:1px solid #000;"></div>
<div style="position:absolute;left:1414px;top:615px;width:17px;height:18px;background:#f8a860;border:1px solid #000;"></div>
<div style="position:absolute;left:1414px;top:635px;width:17px;height:18px;background:#808000;border:1px solid #000;"></div>
<div style="position:absolute;left:1414px;top:655px;width:17px;height:18px;background:#800000;border:1px solid #000;"></div>
<div style="position:absolute;left:1414px;top:675px;width:17px;height:18px;background:#000080;border:1px solid #000;"></div>
<div style="position:absolute;left:1414px;top:695px;width:17px;height:3px;background:#008000;border:1px solid #000;border-bottom:none;"></div>
<div style="position:absolute;left:1257px;top:698px;width:175px;height:1px;background:#a0a0a0"></div>
<div style="position:absolute;left:8px;top:699px;width:647px;height:1px;background:#a0a0a0"></div>
<div style="position:absolute;left:8px;top:700px;width:646px;height:1px;background:#ffffff"></div>
<div style="position:absolute;left:8px;top:729px;width:647px;height:1px;background:#a0a0a0"></div>
<div style="position:absolute;left:654px;top:699px;width:1px;height:31px;background:#a0a0a0"></div>
<div style="position:absolute;left:11px;top:701px;width:1px;height:27px;background:#ffffff"></div>
<div style="position:absolute;left:12px;top:701px;width:1px;height:27px;background:#a0a0a0"></div>
<div style="position:absolute;left:9px;top:728px;width:4px;height:1px;background:#a0a0a0"></div>
<div style="position:absolute;left:8px;top:699px;width:1425px;height:1px;background:#ffffff"></div>
<div style="position:absolute;left:8px;top:729px;width:1425px;height:1px;background:#a0a0a0"></div>
<div style="position:absolute;left:8px;top:730px;width:1425px;height:1px;background:#ffffff"></div>
<div style="position:absolute;left:8px;top:733px;width:1003px;height:19px;border-top:1px solid #a0a0a0;border-left:1px solid #a0a0a0;border-right:1px solid #fff;border-bottom:1px solid #fff"></div>
<div style="position:absolute;left:1011px;top:733px;width:185px;height:19px;border-top:1px solid #a0a0a0;border-left:1px solid #a0a0a0;border-right:1px solid #fff;border-bottom:1px solid #fff"></div>
<div style="position:absolute;left:1227px;top:733px;width:185px;height:19px;border-top:1px solid #a0a0a0;border-left:1px solid #a0a0a0;border-right:1px solid #fff;border-bottom:1px solid #fff"></div>
<div class="t" style="left:10px;top:735px;font-size:14px;color:#000">选择工具：没有选中对象</div>
<div class="t" style="left:1013px;top:736px;font-family:'Liberation Mono',monospace;font-size:11.5px;color:#000;transform:scaleY(1.15);transform-origin:0 0">308.673 226.556</div>
<div style="position:absolute;left:1199px;top:733px;width:25px;height:18px;background:#f0f0f0;border-top:1px solid #fff;border-left:1px solid #fff;border-right:1px solid #808080;border-bottom:1px solid #808080"><div class="t" style="left:7px;top:2px;font-size:13px;font-weight:bold;color:#9a9a9a;text-shadow:1px 1px 0 #fff">U</div></div>
<svg style="left:1416px;top:738px;" width="15" height="14" viewBox="0 0 15 14"><path class="s" d="M14 1 L2 13 M14 5 L6 13 M14 9 L10 13" stroke="#a0a0a0" stroke-width="1.2"/><path class="s" d="M15 2 L3 14 M15 6 L7 14 M15 10 L11 14" stroke="#fff" stroke-width="1"/></svg>
<div style="position:absolute;left:104px;top:53px;width:1px;height:26px;background:#a0a0a0"></div>
<div style="position:absolute;left:105px;top:53px;width:1px;height:26px;background:#ffffff"></div>
<div style="position:absolute;left:137px;top:52px;width:29px;height:29px;background-color:#f7f7f7;background-image:repeating-conic-gradient(#ffffff 0 25%,#ececec 0 50%);background-size:2px 2px;border-top:1px solid #a0a0a0;border-left:1px solid #a0a0a0;border-bottom:1px solid #fff;border-right:1px solid #fff"></div>
<div style="position:absolute;left:166px;top:52px;width:17px;height:29px;background-color:#f7f7f7;background-image:repeating-conic-gradient(#ffffff 0 25%,#ececec 0 50%);background-size:2px 2px;border-top:1px solid #a0a0a0;border-left:1px solid #a0a0a0;border-bottom:1px solid #fff;border-right:1px solid #fff"></div>
<div style="position:absolute;left:185px;top:53px;width:1px;height:26px;background:#a0a0a0"></div>
<div style="position:absolute;left:186px;top:53px;width:1px;height:26px;background:#ffffff"></div>
<div style="position:absolute;left:249px;top:53px;width:1px;height:26px;background:#a0a0a0"></div>
<div style="position:absolute;left:250px;top:53px;width:1px;height:26px;background:#ffffff"></div>
<div style="position:absolute;left:371px;top:53px;width:1px;height:26px;background:#a0a0a0"></div>
<div style="position:absolute;left:372px;top:53px;width:1px;height:26px;background:#ffffff"></div>
<div style="position:absolute;left:469px;top:53px;width:1px;height:26px;background:#a0a0a0"></div>
<div style="position:absolute;left:470px;top:53px;width:1px;height:26px;background:#ffffff"></div>
<div style="position:absolute;left:531px;top:53px;width:1px;height:26px;background:#a0a0a0"></div>
<div style="position:absolute;left:532px;top:53px;width:1px;height:26px;background:#ffffff"></div>
<div style="position:absolute;left:191px;top:84px;width:1px;height:26px;background:#a0a0a0"></div>
<div style="position:absolute;left:192px;top:84px;width:1px;height:26px;background:#ffffff"></div>
<div style="position:absolute;left:604px;top:84px;width:1px;height:26px;background:#a0a0a0"></div>
<div style="position:absolute;left:605px;top:84px;width:1px;height:26px;background:#ffffff"></div>
<div style="position:absolute;left:337px;top:148px;width:23px;height:23px;border:1px solid #a0a0a0;border-right-color:#fff;border-bottom-color:#fff;outline:1px solid #a0a0a0;outline-offset:-2px"></div>
<div style="position:absolute;left:15px;top:700px;width:29px;height:29px;background-color:#f7f7f7;background-image:repeating-conic-gradient(#ffffff 0 25%,#ececec 0 50%);background-size:2px 2px;border-top:1px solid #a0a0a0;border-left:1px solid #a0a0a0;border-bottom:1px solid #fff;border-right:1px solid #fff"></div>
<div style="position:absolute;left:73px;top:700px;width:29px;height:29px;background-color:#f7f7f7;background-image:repeating-conic-gradient(#ffffff 0 25%,#ececec 0 50%);background-size:2px 2px;border-top:1px solid #a0a0a0;border-left:1px solid #a0a0a0;border-bottom:1px solid #fff;border-right:1px solid #fff"></div>
<div style="position:absolute;left:102px;top:700px;width:29px;height:29px;background-color:#f7f7f7;background-image:repeating-conic-gradient(#ffffff 0 25%,#ececec 0 50%);background-size:2px 2px;border-top:1px solid #a0a0a0;border-left:1px solid #a0a0a0;border-bottom:1px solid #fff;border-right:1px solid #fff"></div>
<div style="position:absolute;left:131px;top:700px;width:29px;height:29px;background-color:#f7f7f7;background-image:repeating-conic-gradient(#ffffff 0 25%,#ececec 0 50%);background-size:2px 2px;border-top:1px solid #a0a0a0;border-left:1px solid #a0a0a0;border-bottom:1px solid #fff;border-right:1px solid #fff"></div>
<div style="position:absolute;left:160px;top:700px;width:29px;height:29px;background-color:#f7f7f7;background-image:repeating-conic-gradient(#ffffff 0 25%,#ececec 0 50%);background-size:2px 2px;border-top:1px solid #a0a0a0;border-left:1px solid #a0a0a0;border-bottom:1px solid #fff;border-right:1px solid #fff"></div>
<div style="position:absolute;left:253px;top:700px;width:28px;height:29px;background-color:#f7f7f7;background-image:repeating-conic-gradient(#ffffff 0 25%,#ececec 0 50%);background-size:2px 2px;border-top:1px solid #a0a0a0;border-left:1px solid #a0a0a0;border-bottom:1px solid #fff;border-right:1px solid #fff"></div>
<div style="position:absolute;left:249px;top:702px;width:1px;height:25px;background:#a0a0a0"></div>
<div style="position:absolute;left:250px;top:702px;width:1px;height:25px;background:#ffffff"></div>
<div style="position:absolute;left:313px;top:702px;width:1px;height:25px;background:#a0a0a0"></div>
<div style="position:absolute;left:314px;top:702px;width:1px;height:25px;background:#ffffff"></div>
<div style="position:absolute;left:406px;top:702px;width:1px;height:25px;background:#a0a0a0"></div>
<div style="position:absolute;left:407px;top:702px;width:1px;height:25px;background:#ffffff"></div>
<div style="position:absolute;left:470px;top:702px;width:1px;height:25px;background:#a0a0a0"></div>
<div style="position:absolute;left:471px;top:702px;width:1px;height:25px;background:#ffffff"></div>
<div style="position:absolute;left:534px;top:702px;width:1px;height:25px;background:#a0a0a0"></div>
<div style="position:absolute;left:535px;top:702px;width:1px;height:25px;background:#ffffff"></div>
<svg style="left:0;top:0" width="1440" height="760" viewBox="0 0 1440 760"><g transform="translate(24,58)"><path d="M0.5 0.5H7.5L10.5 3.5V12.5H0.5Z" fill="#fff" stroke="#000" stroke-width="1.3"/><path d="M7.5 0.5V3.5H10.5" fill="none" stroke="#000"/></g><g transform="translate(51,57)"><path class="s" d="M0.5 4.5H4.5L5.5 5.5H10.5V13.5H0.5Z" fill="#f4ee80" stroke="#000" stroke-width="1.2"/><path class="s" d="M0.5 13.5L4 7.5H15L11 13.5Z" fill="#828228" stroke="#000" stroke-width="1.2"/><path class="s" d="M8.5 2.5Q11 -0.5 13.5 2.5" fill="none" stroke="#000" stroke-width="1.2"/><path d="M12 2H15V5Z" fill="#000"/></g><g transform="translate(80,58)"><rect x="0.5" y="0.5" width="14" height="14" fill="#808000" stroke="#000" stroke-width="1.2"/><rect x="3" y="1" width="9" height="6" fill="#e8e8d8"/><rect x="3" y="10" width="9" height="5" fill="#101010"/><rect x="9" y="11" width="2" height="3" fill="#fff"/></g><g transform="translate(113,58)"><path d="M0 8h2v1h-2zM3 8h2v1h-2zM6 8h6v1h-6zM13 8h2v1h-2zM16 8h2v1h-2zM8 0h1v2h-1zM8 3h1v2h-1zM8 6h1v6h-1zM8 13h1v2h-1zM8 16h1v2h-1z" fill="#101098"/><path d="M7 7h3v3h-3z" fill="#101098" opacity="0.35"/></g><g transform="translate(145,60)"><rect x="0.8" y="0.8" width="14.4" height="13.4" fill="none" stroke="#0000c8" stroke-width="1.6" class="s"/><path class="s" d="M1.5 1.5L14.5 13.5M14.5 1.5L1.5 13.5" stroke="#0000c8" stroke-width="1"/></g><g transform="translate(171,64)"><path class="s" d="M0 0H9.5L4.75 5Z" fill="#000"/></g><g transform="translate(195,61)"><path class="s" d="M2 5Q7 0 10.5 3.5Q12.5 6.5 9 9" fill="none" stroke="#a8a8a8" stroke-width="1.8"/><path class="s" d="M0 8L1 2L6 6Z" fill="#a8a8a8"/></g><g transform="translate(226,61)"><path class="s" d="M11 5Q6 0 2.5 3.5Q0.5 6.5 4 9" fill="none" stroke="#a8a8a8" stroke-width="1.8"/><path class="s" d="M13 8L12 2L7 6Z" fill="#a8a8a8"/></g><g transform="translate(261,59)"><path class="s" d="M1 1L13 13M13 1L1 13" stroke="#800000" stroke-width="2.4"/></g><g transform="translate(291,57)"><path class="s" d="M3 0L6 9M8 0L5 9" stroke="#a0a0a0" stroke-width="1.2"/><circle class="s" cx="3" cy="12" r="2.3" fill="none" stroke="#a0a0a0" stroke-width="1.2"/><circle class="s" cx="8" cy="12" r="2.3" fill="none" stroke="#a0a0a0" stroke-width="1.2"/></g><g transform="translate(317,59)"><path d="M0.5 0.5H6.5L8.5 2.5V9.5H0.5Z" fill="#f0f0f0" stroke="#a0a0a0"/><path d="M6.5 4.5H12.5L15.5 7.5V13.5H6.5Z" fill="#f0f0f0" stroke="#a0a0a0"/><path d="M2 3h4v1h-4zM2 5h4v1h-4zM8 8h5v1h-5zM8 10h5v1h-5z" fill="#a0a0a0"/></g><g transform="translate(347,58)"><path class="s" d="M0.5 2.5H12.5V13.5H0.5Z" fill="#a8a8a8" stroke="#909090"/><rect x="4" y="0" width="5" height="3" fill="#a0a0a0"/><path d="M6.5 6.5H15.5V14.5H6.5Z" fill="#f0f0f0" stroke="#a0a0a0"/><path d="M8 9h6v1h-6zM8 11h6v1h-6z" fill="#a0a0a0"/></g><g transform="translate(381,56)"><rect x="0.5" y="0.5" width="16" height="18" fill="#f4f0f0" stroke="#000068" stroke-width="1.4"/><path class="s" d="M7.5 2.5V16.5M2 10H14.5" stroke="#d42010" stroke-width="1.1"/><path class="s" d="M5 5L7.5 2.5L10 5M12 7.5L14.5 10L12 12.5" fill="none" stroke="#d42010" stroke-width="1.1"/></g><g transform="translate(408,63)"><path class="s" d="M0 0H9.5L4.75 5Z" fill="#000"/></g><g transform="translate(427,59)"><path class="s" d="M0.5 5.5H11.5V15.5H0.5ZM0.5 5.5L5.5 0.5H16.5L11.5 5.5M16.5 0.5V10.5L11.5 15.5M5.5 0.5V10.5H16.5M0.5 15.5L5.5 10.5" fill="none" stroke="#a0a0a0" stroke-width="1.1"/></g><g transform="translate(454,63)"><path class="s" d="M0 0H9.5L4.75 5Z" fill="#a0a0a0"/></g><g transform="translate(478,56)"><path class="s" d="M0 0H19V11H16A6.5 6.5 0 0 0 3 11H0Z" fill="#a0a0a0"/><path class="s" d="M3 12A6.5 6.5 0 0 0 16 12Z" fill="#a0a0a0"/></g><g transform="translate(507,56)"><path class="s" d="M0 0H19V9Q19 11 16 12A6.5 7 0 0 1 3 12Q0 11 0 9Z" fill="#a0a0a0"/></g><path class="s" d="M613.4 62.9L618.6 68.1M618.6 62.9L613.4 68.1" stroke="#d02020" stroke-width="1"/><path class="s" d="M637.5 59.5L650 72" stroke="#000" stroke-width="1.1"/><path class="s" d="M664 68Q664 59.5 673.5 59.5Q683 59.5 683 68" fill="none" stroke="#000" stroke-width="1.1"/><path class="s" d="M662.5 66.5L665.5 69.5M665.5 66.5L662.5 69.5" stroke="#a01010" stroke-width="1"/><path class="s" d="M681.5 66.5L684.5 69.5M684.5 66.5L681.5 69.5" stroke="#a01010" stroke-width="1"/><path class="s" d="M672.0 58.0L675.0 61.0M675.0 58.0L672.0 61.0" stroke="#a01010" stroke-width="1"/><path class="s" d="M671.5 67.5H676M673.75 65.2V69.8" stroke="#000" stroke-width="1.2"/><path class="s" d="M695.5 71.5Q695 66 698.5 64.5Q700 64 700.5 66.5Q701 69 703 66Q705 62 706.5 60" fill="none" stroke="#000" stroke-width="1.1"/><path class="s" d="M724 59.5H731.5L739 66.5L727.5 72V64" fill="none" stroke="#000" stroke-width="1.1"/><circle class="s" cx="760" cy="66.3" r="7.3" fill="none" stroke="#000" stroke-width="1.1"/><path class="s" d="M758.4 64.7L761.6 67.89999999999999M761.6 64.7L758.4 67.89999999999999" stroke="#d02020" stroke-width="1"/><ellipse class="s" cx="789" cy="66.3" rx="9.5" ry="3.8" fill="none" stroke="#000" stroke-width="1.1"/><rect x="809.5" y="60.5" width="17" height="11" fill="none" stroke="#000" stroke-width="1.1"/><path class="s" d="M808.0 59.0L811.0 62.0M811.0 59.0L808.0 62.0" stroke="#d02020" stroke-width="1"/><path class="s" d="M825.0 70.0L828.0 73.0M828.0 70.0L825.0 73.0" stroke="#d02020" stroke-width="1"/><path class="s" d="M846.5 56.5L849 62.5H856L850.5 66.5L853.5 74L846.5 69.5L839.5 74L842.5 66.5L837 62.5H844Z" fill="none" stroke="#000" stroke-width="1.1"/><path class="s" d="M872 57.5H880L885 62.5V69.5L880 74.5H872L867 69.5V62.5Z" fill="none" stroke="#000" stroke-width="1.1"/><rect x="21.5" y="89.5" width="8" height="8" fill="#fff" stroke="#000" stroke-width="1.2"/><path class="s" d="M33.08 99.08L37.08 103.08" stroke="#800060" stroke-width="2.2"/><circle class="s" cx="30.5" cy="96.5" r="4.3" fill="#88e8f0" stroke="#000" stroke-width="1.2"/><circle class="s" cx="28.5" cy="97.5" r="1.3" fill="#000"/><path class="s" d="M59.7 98.7L63.7 102.7" stroke="#800060" stroke-width="2.2"/><circle class="s" cx="57" cy="96" r="4.5" fill="#88e8f0" stroke="#000" stroke-width="1.2"/><path d="M61 91h5v1h-5z" fill="#000"/><path class="s" d="M88.7 98.7L92.7 102.7" stroke="#800060" stroke-width="2.2"/><circle class="s" cx="86" cy="96" r="4.5" fill="#88e8f0" stroke="#000" stroke-width="1.2"/><path d="M91 91h5v1h-5zM93 89h1v5h-1z" fill="#000"/><path class="s" d="M110 93H117L110 98.5H117M115 90H120L115 95H120M112 104L123 95M110 104.5H123" fill="none" stroke="#a8a8a8" stroke-width="1.2"/><path class="s" d="M109 105L110 100L114 103Z" fill="#a8a8a8"/><path class="s" d="M138 98Q138 91 145 91Q153 91 153 98Q153 105 145 105Q138 105 138 98Z" fill="#a0a0a0"/><path class="s" d="M138 90L141 93M141 89L143 92M144 88L145 91M147 88L147 91M150 89L149 92" stroke="#a0a0a0" stroke-width="1"/><circle cx="142" cy="97.5" r="1.5" fill="#f0f0f0"/><circle cx="149" cy="99" r="1.2" fill="#f0f0f0"/><circle class="s" cx="173.5" cy="96" r="5" fill="none" stroke="#a8a8a8" stroke-width="1.3"/><path class="s" d="M177 100L182 104.5M173.5 93V97M168 100L170 104L172 101" fill="none" stroke="#a8a8a8" stroke-width="1.3"/><path class="s" d="M208.5 90.5V104.5M201.5 97.5H215.5" stroke="#000" stroke-width="1.6"/><path class="s" d="M205.5 93L208.5 89.5L211.5 93ZM205.5 102L208.5 105.5L211.5 102ZM204 94.5L200.5 97.5L204 100.5ZM213 94.5L216.5 97.5L213 100.5Z" fill="#000"/><path class="s" d="M240.5 100.5L245.5 105" stroke="#2080a0" stroke-width="2.4"/><circle class="s" cx="237" cy="96" r="5.3" fill="#f8f8f8" stroke="#000" stroke-width="1.2"/><path class="s" d="M237 93V99" stroke="#000" stroke-width="1"/><path d="M235.5 94.5L237 92.5L238.5 94.5ZM235.5 97.5L237 99.5L238.5 97.5Z" fill="#000"/><path class="s" d="M260 97A6.3 6.3 0 0 1 271 92.5M272.5 97A6.3 6.3 0 0 1 261.5 101.5" fill="none" stroke="#a8a8a8" stroke-width="1.3"/><path d="M268.5 90L273 89.5L272.5 94ZM264 104L259.5 104.5L260 100Z" fill="#a8a8a8"/><circle class="s" cx="441.5" cy="95" r="5.2" fill="#108010" stroke="#000" stroke-width="1.2"/><rect x="439.0" y="100" width="5" height="5" fill="#000"/><rect x="440.0" y="101.5" width="3" height="1" fill="#fff"/><circle class="s" cx="470.5" cy="95" r="5.2" fill="#f0f020" stroke="#000" stroke-width="1.2"/><rect x="468.0" y="100" width="5" height="5" fill="#000"/><rect x="469.0" y="101.5" width="3" height="1" fill="#fff"/><path class="s" d="M493 94L498.5 100.5H495.5L497 104L496 104.5L494 101L493 102Z" fill="#a8a8a8"/><circle class="s" cx="503.5" cy="94.5" r="4" fill="none" stroke="#a8a8a8" stroke-width="1.2"/><circle cx="503.5" cy="94.5" r="2" fill="#a8a8a8"/><path d="M501.5 99h4v1h-4zM501.5 101h4v1h-4z" fill="#a8a8a8"/><circle class="s" cx="525" cy="93.5" r="3.2" fill="#a0a0a0" stroke="#000" stroke-width="1"/><circle class="s" cx="532.5" cy="101.5" r="3.3" fill="#f4f400" stroke="#000" stroke-width="1"/><path class="s" d="M531.5 90H534.5V93.5H536.5L533 97L529.5 93.5H531.5Z" fill="#000"/><path class="s" d="M524 105H527V101.5H529L525.5 98L522 101.5H524Z" fill="#000"/><path class="s" d="M551 97.5L557.5 91V94.5H564V101H557.5V104.5Z" fill="#f0f0f0" stroke="#a8a8a8" stroke-width="1.2"/><path d="M558 95L564 95V101H558Z" fill="#a8a8a8"/><path class="s" d="M593.5 97.5L587 91V94.5H581V101H587V104.5Z" fill="#f0f0f0" stroke="#a8a8a8" stroke-width="1.2"/><path d="M581 94.5H587V101L583 104Z" fill="#a8a8a8"/><path class="s" d="M615.5 92.5L620.5 88.5V104.5L615.5 106.5Z" fill="#f4f4fc" stroke="#000060" stroke-width="1"/><path class="s" d="M618.5 92.5L623.5 88.5V104.5L618.5 106.5Z" fill="#f4f4fc" stroke="#000060" stroke-width="1"/><path class="s" d="M621.5 93.5L628.5 89.5V103.5L621.5 107.5Z" fill="#f4f4fc" stroke="#000060" stroke-width="1.1"/><path d="M642 90h17v2h-17zM642 94h4v2h-4zM648 94h5v2h-5zM655 94h4v2h-4zM642 98h4v2h-4zM648 98h2v2h-2zM651 98h2v2h-2zM655 98h4v2h-4zM642 102h2v2h-2zM645 102h2v2h-2zM648 102h2v2h-2zM651 102h2v2h-2zM654 102h2v2h-2zM657 102h2v2h-2z" fill="#400028"/><path class="s" d="M672.5 95H687L682 100V103.5H677.5V100Z" fill="#f0f0f0" stroke="#a8a8a8" stroke-width="1.3"/><path class="s" d="M675 89L677 92M679 89L680 92M683 89L682 92M686 89L684 92" stroke="#a8a8a8" stroke-width="1"/><path class="s" d="M21 122.5H36" stroke="#000050" stroke-width="1.2"/><path class="s" d="M26 120L30.5 130M31 120L26.5 130" stroke="#000050" stroke-width="1.2"/><circle class="s" cx="25" cy="131.5" r="2.2" fill="none" stroke="#000080" stroke-width="1.2"/><circle class="s" cx="31" cy="131.5" r="2.2" fill="none" stroke="#000080" stroke-width="1.2"/><path class="s" d="M56 118L68 129.5" stroke="#000" stroke-width="1.1"/><path class="s" d="M50 135L61 124" stroke="#900020" stroke-width="1.1"/><path d="M58 123.5L62 123L61.5 127Z" fill="#d02020"/><path class="s" d="M79.5 137V120.5H96" fill="none" stroke="#000" stroke-width="1.3"/><path class="s" d="M80 131Q81 123 90.5 121" fill="none" stroke="#d02040" stroke-width="1"/><path class="s" d="M108.5 137V120.5H125" fill="none" stroke="#000" stroke-width="1.3"/><path class="s" d="M108.5 131L119 121" fill="none" stroke="#d02040" stroke-width="1"/><path class="s" d="M147.5 121.5H137.5V135.5H152.5V123.5" fill="none" stroke="#a8a8a8" stroke-width="1.1"/><rect x="150.5" y="118.5" width="4" height="4" fill="none" stroke="#a8a8a8"/><path class="s" d="M164.5 136V128L172.5 119.5H184" fill="none" stroke="#1010d0" stroke-width="1.3"/><path class="s" d="M171 136V132L178 125H184" fill="none" stroke="#000" stroke-width="1.3"/><path class="s" d="M166 126L170 130M171 121L175 125" stroke="#c02020" stroke-width="1"/><path d="M165 125h3v2h-3zM170 120h3v2h-3z" fill="#d02020"/><path class="s" d="M195 124.5H211Q214 124.5 214 127.5Q214 130.5 211 130.5H195Q192 130.5 192 127.5Q192 124.5 195 124.5Z" fill="none" stroke="#a8a8a8" stroke-width="1.1"/><path d="M195 127h16v1h-16z" fill="#a8a8a8"/><rect x="222.5" y="118.5" width="20" height="19" fill="none" stroke="#a0a0a0" stroke-width="1.1"/><rect x="225.5" y="121.5" width="14" height="13" fill="none" stroke="#a0a0a0"/><rect x="228.5" y="124.5" width="8" height="7" fill="none" stroke="#a0a0a0"/><rect x="231.5" y="126.5" width="3" height="3" fill="none" stroke="#a0a0a0"/><rect x="251.5" y="118.5" width="5" height="5" fill="none" stroke="#a0a0a0"/><rect x="254.5" y="121.5" width="5" height="5" fill="none" stroke="#a0a0a0"/><path class="s" d="M261 121.5H265.5V125" fill="none" stroke="#a0a0a0"/><path d="M263.5 124H267.5L265.5 126.5Z" fill="#a0a0a0"/><path class="s" d="M261.5 128.5H265.5V131.5H268.5V137.5H264.5V134.5H261.5Z" fill="none" stroke="#a0a0a0"/><rect x="280.5" y="118.5" width="5" height="5" fill="none" stroke="#a0a0a0"/><rect x="283.5" y="121.5" width="5" height="5" fill="none" stroke="#a0a0a0"/><path class="s" d="M290 121.5H294.5V125" fill="none" stroke="#a0a0a0"/><path d="M292.5 124H296.5L294.5 126.5Z" fill="#a0a0a0"/><path class="s" d="M290.5 128.5H296.5V132.5H293.5V135.5H290.5Z" fill="none" stroke="#a0a0a0"/><rect x="309.5" y="118.5" width="5" height="5" fill="none" stroke="#a0a0a0"/><rect x="312.5" y="121.5" width="5" height="5" fill="none" stroke="#a0a0a0"/><path class="s" d="M319 121.5H323.5V125" fill="none" stroke="#a0a0a0"/><path d="M321.5 124H325.5L323.5 126.5Z" fill="#a0a0a0"/><rect x="321.5" y="131.5" width="4" height="3" fill="none" stroke="#a0a0a0"/><rect x="19.5" y="149.5" width="9" height="8" fill="none" stroke="#a0a0a0" stroke-width="1.1"/><rect x="29.5" y="159.5" width="9" height="8" fill="none" stroke="#a0a0a0" stroke-width="1.1"/><path class="s" d="M31 151L36.5 156.5" stroke="#a0a0a0"/><path d="M37 157.5L37 153L33 157Z" fill="#a0a0a0"/><rect x="48.5" y="153.5" width="5" height="13" fill="none" stroke="#a0a0a0" stroke-width="1.1"/><rect x="60.5" y="153.5" width="6" height="13" fill="none" stroke="#a0a0a0" stroke-width="1.1"/><path d="M57 152h1v17h-1zM51 149h12v1h-12z" fill="#a0a0a0"/><path d="M63 147.5L66 149.5L63 151.5Z" fill="#a0a0a0"/><path class="s" d="M82.5 155H92.5V165H82.5Z" fill="none" stroke="#a0a0a0" stroke-width="1.1"/><path class="s" d="M87.5 151.5L91 155M87.5 151.5L84 155M79 160L82.5 156.5M79 160L82.5 163.5M96 160L92.5 156.5M96 160L92.5 163.5M87.5 168.5L84 165M87.5 168.5L91 165" stroke="#a0a0a0" stroke-width="1"/><path d="M81 149h12v1h-12z" fill="#a0a0a0"/><path class="s" d="M109.5 166.5L112.5 155.5H126L122.5 166.5Z" fill="none" stroke="#a0a0a0" stroke-width="1.1"/><path d="M108 152h12v1h-12zM108 160h1v7h-1z" fill="#a0a0a0"/><path d="M120 150.5L123 152.5L120 154.5Z" fill="#a0a0a0"/><rect x="136.5" y="153.5" width="17" height="12" fill="none" stroke="#a0a0a0" stroke-width="1.1"/><path d="M137 157h16v1h-16zM138 149h11v1h-11z" fill="#a0a0a0"/><path d="M149 147.5L152 149.5L149 151.5Z" fill="#a0a0a0"/><rect x="167.5" y="150.5" width="3" height="3" fill="none" stroke="#a0a0a0"/><rect x="167.5" y="155.5" width="3" height="3" fill="none" stroke="#a0a0a0"/><rect x="167.5" y="160.5" width="3" height="3" fill="none" stroke="#a0a0a0"/><rect x="172.5" y="150.5" width="3" height="3" fill="none" stroke="#a0a0a0"/><rect x="172.5" y="155.5" width="3" height="3" fill="none" stroke="#a0a0a0"/><rect x="172.5" y="160.5" width="3" height="3" fill="none" stroke="#a0a0a0"/><rect x="177.5" y="150.5" width="3" height="3" fill="none" stroke="#a0a0a0"/><rect x="177.5" y="155.5" width="3" height="3" fill="none" stroke="#a0a0a0"/><rect x="177.5" y="160.5" width="3" height="3" fill="none" stroke="#a0a0a0"/><path d="M164 155h1v12h-1zM166 168h11v1h-11z" fill="#a0a0a0"/><path d="M177 166.5L180 168.5L177 170.5ZM162.5 155L164.5 152L166.5 155Z" fill="#a0a0a0"/><path class="s" d="M193.5 164Q197 152 203 152Q209 152 213 164" fill="none" stroke="#a0a0a0" stroke-width="1.1"/><rect x="193.5" y="154.5" width="3" height="3" fill="none" stroke="#a0a0a0"/><rect x="201.5" y="150.5" width="3" height="3" fill="none" stroke="#a0a0a0"/><rect x="209.5" y="154.5" width="3" height="3" fill="none" stroke="#a0a0a0"/><path class="s" d="M222 166Q236 164 240 153" fill="none" stroke="#a0a0a0" stroke-width="1.1"/><path d="M223 151h3v1h-3zM228 151h3v1h-3zM233 151h3v1h-3zM224 152h1v9h-1zM229 152h1v8h-1zM234 152h1v7h-1z" fill="#a0a0a0"/><path d="M222.5 160L224.5 163L226.5 160ZM227.5 159L229.5 162L231.5 159ZM232.5 158L234.5 161L236.5 158Z" fill="#a0a0a0"/><path class="s" d="M253 168Q258 166 258.5 160Q259 155 266 152.5" fill="none" stroke="#a0a0a0" stroke-width="1"/><rect x="252.5" y="163.5" width="3" height="3" fill="none" stroke="#a0a0a0"/><rect x="258.5" y="157.5" width="3" height="3" fill="none" stroke="#a0a0a0"/><rect x="260.5" y="151.5" width="3" height="3" fill="none" stroke="#a0a0a0"/><rect x="266.5" y="148.5" width="3" height="3" fill="none" stroke="#a0a0a0"/><rect x="281.5" y="151.5" width="16" height="14" fill="none" stroke="#a0a0a0" stroke-width="1.1"/><path class="s" d="M289.5 152.5V164.5M282.5 158.5H296.5M287.5 154.5L289.5 152.5L291.5 154.5M287.5 162.5L289.5 164.5L291.5 162.5M284.5 156.5L282.5 158.5L284.5 160.5M294.5 156.5L296.5 158.5L294.5 160.5" fill="none" stroke="#a0a0a0" stroke-width="1"/><path class="s" d="M318.5 149V170M308 159.5H329M312.5 154.5H310.5V164.5H312.5M324.5 154.5H326.5V164.5H324.5M313.5 151.5V153.5H323.5V151.5M313.5 167.5V165.5H323.5V167.5M316 153.5L318.5 151L321 153.5M316 165.5L318.5 168L321 165.5" fill="none" stroke="#a0a0a0" stroke-width="1"/><circle cx="318.5" cy="159.5" r="4" fill="none" stroke="#a0a0a0"/><rect x="340.5" y="151.5" width="6" height="6" fill="none" stroke="#a0a0a0"/><rect x="344.5" y="155.5" width="6" height="6" fill="none" stroke="#a0a0a0"/><rect x="348.5" y="159.5" width="7" height="7" fill="none" stroke="#a0a0a0"/><rect x="369.5" y="151.5" width="6" height="6" fill="none" stroke="#a0a0a0"/><rect x="373.5" y="155.5" width="6" height="6" fill="none" stroke="#a0a0a0"/><rect x="377.5" y="159.5" width="7" height="7" fill="none" stroke="#a0a0a0"/><g transform="translate(397,149)"><path class="s" d="M0 0H19V11H16A6.5 6.5 0 0 0 3 11H0Z" fill="#a0a0a0"/><path class="s" d="M3 12A6.5 6.5 0 0 0 16 12Z" fill="#a0a0a0"/></g><g transform="translate(426,149)"><path class="s" d="M0 0H19V9Q19 11 16 12A6.5 7 0 0 1 3 12Q0 11 0 9Z" fill="#a0a0a0"/></g><rect x="15.5" y="190.5" width="17" height="17" fill="none" stroke="#000060" stroke-width="1.2"/><circle class="s" cx="15.5" cy="190.5" r="1.5" fill="#f0f0f0" stroke="#000060" stroke-width="1"/><circle class="s" cx="32.5" cy="190.5" r="1.5" fill="#f0f0f0" stroke="#000060" stroke-width="1"/><circle class="s" cx="15.5" cy="207.5" r="1.5" fill="#f0f0f0" stroke="#000060" stroke-width="1"/><circle class="s" cx="24" cy="190.5" r="1.5" fill="#f0f0f0" stroke="#c02030" stroke-width="1"/><circle class="s" cx="24" cy="207.5" r="1.5" fill="#f0f0f0" stroke="#c02030" stroke-width="1"/><circle class="s" cx="15.5" cy="199" r="1.5" fill="#f0f0f0" stroke="#c02030" stroke-width="1"/><circle class="s" cx="32.5" cy="199" r="1.5" fill="#f0f0f0" stroke="#c02030" stroke-width="1"/><rect x="31" y="206" width="3" height="3" fill="#000060"/><rect x="22.5" y="197.5" width="3" height="3" fill="#20d020"/><path class="s" d="M12.5 238.5L19 224.5L33 218.5" fill="none" stroke="#1010a0" stroke-width="1.1"/><rect x="17" y="222.5" width="4" height="4" fill="#1010a0"/><path class="s" d="M22 227L33 233L28 233.5L26 239L22 227Z" fill="#fff" stroke="#1010a0" stroke-width="1.2"/><path class="s" d="M25 229.5L32 233L28 233.5Z" fill="#1010a0"/><text x="12" y="265" font-family="Liberation Sans,sans-serif" font-weight="bold" font-size="14" fill="#1010a0" textLength="23" lengthAdjust="spacingAndGlyphs">abc</text><rect x="13" y="265.5" width="21" height="3.6" rx="1.8" fill="#1010a0" class="s"/><rect x="15" y="266.6" width="12" height="1.3" fill="#fff"/><path class="s" d="M21 278.5H26Q27.5 278.5 29 280L32.5 283.5Q34 285 34 287V290.5Q34 292.5 32.5 294L29 297.5Q27.5 299 26 299H21Q19.5 299 18 297.5L14.5 294Q13 292.5 13 290.5V287Q13 285 14.5 283.5L18 280Q19.5 278.5 21 278.5Z" fill="none" stroke="#c82828" stroke-width="1.1"/><rect x="18.5" y="283.5" width="10.5" height="10.5" fill="#f0f0f0" stroke="#1010a0" stroke-width="1.3"/><path class="s" d="M10 309L22 307V331H10Z" fill="#f8f020" opacity="0.85"/><path class="s" d="M12 318L22 308.5L31.5 318.5L33 322L29 328.5L22 328.5Z" fill="none" stroke="#000060" stroke-width="1.2"/><path class="s" d="M12 318L22 328.5" stroke="#000" stroke-width="1.2"/><circle cx="12" cy="318" r="1.5" fill="#000"/><circle cx="22" cy="308.5" r="1.5" fill="#000"/><circle cx="31.5" cy="318.5" r="1.5" fill="#000"/><circle cx="33" cy="322" r="1.5" fill="#000"/><circle cx="22" cy="328.5" r="1.5" fill="#000"/><path class="s" d="M14 354.5L25 345L30 348.5L27 352Z" fill="#fff" stroke="#000" stroke-width="1.2"/><path class="s" d="M23 344L28 339.5L30.5 342V349L26 351Z" fill="#4050f0"/><path d="M24 342h1v1h-1zM26 342h1v1h-1zM28 342h1v1h-1zM25 344h1v1h-1zM27 344h1v1h-1zM29 344h1v1h-1zM26 346h1v1h-1zM28 346h1v1h-1zM27 348h1v1h-1z" fill="#c8d0ff"/><path class="s" d="M14 354.5H27" stroke="#000" stroke-width="1.5"/><path class="s" d="M19.5 374V379L15 383.5L23 387L31 383.5L26.5 379V374Z" fill="#10d010" stroke="#000" stroke-width="1"/><path class="s" d="M23 379V387" stroke="#008000" stroke-width="1"/><ellipse class="s" cx="23" cy="374" rx="3.6" ry="2" fill="#f8f020" stroke="#000" stroke-width="0.8"/><rect x="19.5" y="398.5" width="5" height="20" fill="#fff" stroke="#000" stroke-width="1.1"/><path class="s" d="M20 406L24 402M20 411L24 407M20 416L24 412" stroke="#000" stroke-width="1.3"/><text x="13" y="419" font-family="Liberation Sans,sans-serif" font-weight="bold" font-size="7" fill="#c02030">N</text><text x="26.5" y="419" font-family="Liberation Sans,sans-serif" font-weight="bold" font-size="7" fill="#c02030">C</text><path class="s" d="M24 720L34 710" stroke="#000" stroke-width="1"/><circle class="s" cx="24" cy="720" r="1.8" fill="#f0f0f0" stroke="#000" stroke-width="1"/><circle class="s" cx="34" cy="710" r="1.8" fill="#f0f0f0" stroke="#000" stroke-width="1"/><path class="s" d="M50 708.5Q58 708.5 60 711Q62.5 714 62.5 721" fill="none" stroke="#000" stroke-width="1.2"/><circle class="s" cx="60" cy="711" r="1.6" fill="#a0a0a0" stroke="#000" stroke-width="1"/><path class="s" d="M51 719.5L57 713.5M65 709.5L68.5 705.5" stroke="#1010c0" stroke-width="1.2"/><path d="M58 712.5L57.5 716.5L54 713ZM64 710.5L64.5 706.5L68 710Z" fill="#1010c0"/><path class="s" d="M80 709Q88 709 90 711.5Q92.5 715 92.5 722" fill="none" stroke="#000" stroke-width="1.2"/><circle class="s" cx="90" cy="711.5" r="1.5" fill="#f8c060" stroke="#000" stroke-width="1"/><path class="s" d="M110 711L124.5 719M111 721.5L124 708" stroke="#000" stroke-width="1.1"/><rect x="115.5" y="713" width="3.5" height="3.5" fill="#40e0c0" stroke="#000" stroke-width="0.8"/><path class="s" d="M140 708.5Q152.5 708.5 152.5 720" fill="none" stroke="#000" stroke-width="1.2"/><path d="M140 711h1v1h-1zM140 714h1v1h-1zM140 717h1v1h-1zM143 720h1v1h-1zM146 720h1v1h-1zM149 720h1v1h-1z" fill="#606060"/><circle class="s" cx="140.5" cy="720" r="1.5" fill="#f0f0f0" stroke="#000" stroke-width="1"/><path class="s" d="M174.5 707.5L181.5 714.5L174.5 721.5L167.5 714.5Z" fill="none" stroke="#000" stroke-width="1.1"/><circle class="s" cx="174.5" cy="707.5" r="1.4" fill="#f0f0f0" stroke="#a02010" stroke-width="1"/><circle class="s" cx="181.5" cy="714.5" r="1.4" fill="#f0f0f0" stroke="#a02010" stroke-width="1"/><circle class="s" cx="174.5" cy="721.5" r="1.4" fill="#f0f0f0" stroke="#a02010" stroke-width="1"/><circle class="s" cx="167.5" cy="714.5" r="1.4" fill="#f0f0f0" stroke="#a02010" stroke-width="1"/><path class="s" d="M201.5 705V718.5M194 718.5H212" stroke="#000" stroke-width="1.2"/><path d="M204 713h1v1h-1zM207 713h1v1h-1zM205 715h1v1h-1z" fill="#808080"/><circle class="s" cx="201.5" cy="718.5" r="1.6" fill="#80a0a0" stroke="#000" stroke-width="1"/><path class="s" d="M225 705L241 720.5" stroke="#000" stroke-width="1.1"/><path class="s" d="M222 712.5Q226 709 230.5 710.5Q236 713 236 717Q236 720 233.5 722.5" fill="none" stroke="#000" stroke-width="1.2"/><circle class="s" cx="232" cy="711.5" r="1.8" fill="#d02070" stroke="#000" stroke-width="1"/><circle class="s" cx="267" cy="714.5" r="4" fill="#000060"/><path d="M265 714h4v1h-4zM266.5 712.5h1v4h-1z" fill="#40e0f0"/><path class="s" d="M295.5 706V714.5L289 721M295.5 714.5L302 721" fill="none" stroke="#000" stroke-width="1.2"/><circle class="s" cx="295.5" cy="714.5" r="1.6" fill="#f0f0f0" stroke="#c02020" stroke-width="1"/><path d="M298 705h3v1h-3zM299 706h1v1h-1zM298 707h3v1h-3zM286 717h1v1h-1zM288 717h1v1h-1zM287 718h1v2h-1zM303 717h1v1h-1zM305 717h1v1h-1zM304 718h1v1h-1zM303 719h1v1h-1zM305 719h1v1h-1z" fill="#000"/><path class="s" d="M320.0 714.5L330.5 705.5L341.0 714.5L330.5 723.5Z" fill="none" stroke="#000" stroke-width="1.1"/><path class="s" d="M325.25 710.0L335.75 719.0M335.75 710.0L325.25 719.0" stroke="#000" stroke-width="1.1"/><circle class="s" cx="328" cy="711" r="1.9" fill="#c01060" stroke="#000" stroke-width="0.8"/><path class="s" d="M349.5 714.5L360 705.5L370.5 714.5L360 723.5Z" fill="none" stroke="#000" stroke-width="1.1"/><path class="s" d="M354.75 710.0L365.25 719.0M365.25 710.0L354.75 719.0" stroke="#000" stroke-width="1.1"/><circle class="s" cx="363" cy="708" r="1.9" fill="#c01060" stroke="#000" stroke-width="0.8"/><path class="s" d="M378.5 714L389 705L399.5 714L389 723Z" fill="none" stroke="#000" stroke-width="1.1"/><path class="s" d="M383.75 709.5L394.25 718.5M394.25 709.5L383.75 718.5" stroke="#000" stroke-width="1.1"/><circle class="s" cx="389" cy="714" r="1.9" fill="#c01060" stroke="#000" stroke-width="0.8"/><path class="s" d="M420.5 705V714.5H430" fill="none" stroke="#000" stroke-width="1.2"/><rect x="429.5" y="711.5" width="3" height="3" fill="#f0f0f0" stroke="#c02020"/><path class="s" d="M417 716.5H430M415.5 718.5H428.5M414 720.5H427" stroke="#000" stroke-width="1.2"/><path class="s" d="M448.5 705V714.5H458" fill="none" stroke="#000" stroke-width="1.2"/><path class="s" d="M446 716.5H461M444.5 718.5H459.5M443 720.5H458" stroke="#000" stroke-width="1.2"/><circle class="s" cx="451.5" cy="714.5" r="1.9" fill="#c01060" stroke="#000" stroke-width="0.8"/><path class="s" d="M455 712L460.5 706.5" stroke="#1010c0" stroke-width="1.2"/><path d="M454 713L454.5 709L458 712.5Z" fill="#1010c0"/><path class="s" d="M480 709L486 716H483.5L485.5 720L484 721L482 717L480 719Z" fill="#000"/><path class="s" d="M486 705L496 715M496 705L486 715" stroke="#000" stroke-width="0.9"/><circle class="s" cx="490.5" cy="709.5" r="1.8" fill="#f8e040" stroke="#000" stroke-width="0.9"/><path class="s" d="M509 709L515 716H512.5L514.5 720L513 721L511 717L509 719Z" fill="#000"/><path class="s" d="M516.5 707.5L522.5 713.5M522.5 707.5L516.5 713.5" stroke="#e00000" stroke-width="2"/><path class="s" d="M541.5 717.5L552.5 711L561 717L553 722.5Z" fill="none" stroke="#000" stroke-width="1.1"/><path class="s" d="M552.5 708V717" stroke="#000" stroke-width="1"/><rect x="551" y="705" width="3" height="3" fill="#f0f0f0" stroke="#c02020"/><circle class="s" cx="552" cy="717.5" r="1.6" fill="#c01060" stroke="#000" stroke-width="0.8"/><path class="s" d="M557.5 704V711" stroke="#1010c0" stroke-width="1.2"/><path d="M555.5 709.5H559.5L557.5 712.5Z" fill="#1010c0"/><path class="s" d="M571 715.5L589 705.5" stroke="#000" stroke-width="1"/><path class="s" d="M575 719L583.5 710.5" stroke="#000" stroke-width="1"/><circle class="s" cx="575" cy="719" r="1.8" fill="#d020d0" stroke="#000" stroke-width="0.8"/><circle class="s" cx="583.5" cy="710.5" r="1.6" fill="#f8c060" stroke="#000" stroke-width="0.9"/><path class="s" d="M580 707L575 712" stroke="#1010c0" stroke-width="1.2"/><path d="M574 713L574.5 709L578 712.5Z" fill="#1010c0"/><path class="s" d="M600 706L612 716M610 706L600 716" stroke="#000" stroke-width="0.9"/><circle class="s" cx="605" cy="711" r="1.8" fill="#f8e040" stroke="#000" stroke-width="0.9"/><path class="s" d="M608.5 706.5H616.5L618.5 708.5V720.5H608.5Z" fill="#f4f4f4" stroke="#808080"/><path d="M610 709h7v1h-7zM610 711h7v1h-7zM610 713h7v1h-7zM610 715h7v1h-7zM610 717h7v1h-7z" fill="#000"/><path class="s" d="M632 708L645 721M645 708L632 721" stroke="#e00000" stroke-width="3.2"/></svg>
</body></html>
